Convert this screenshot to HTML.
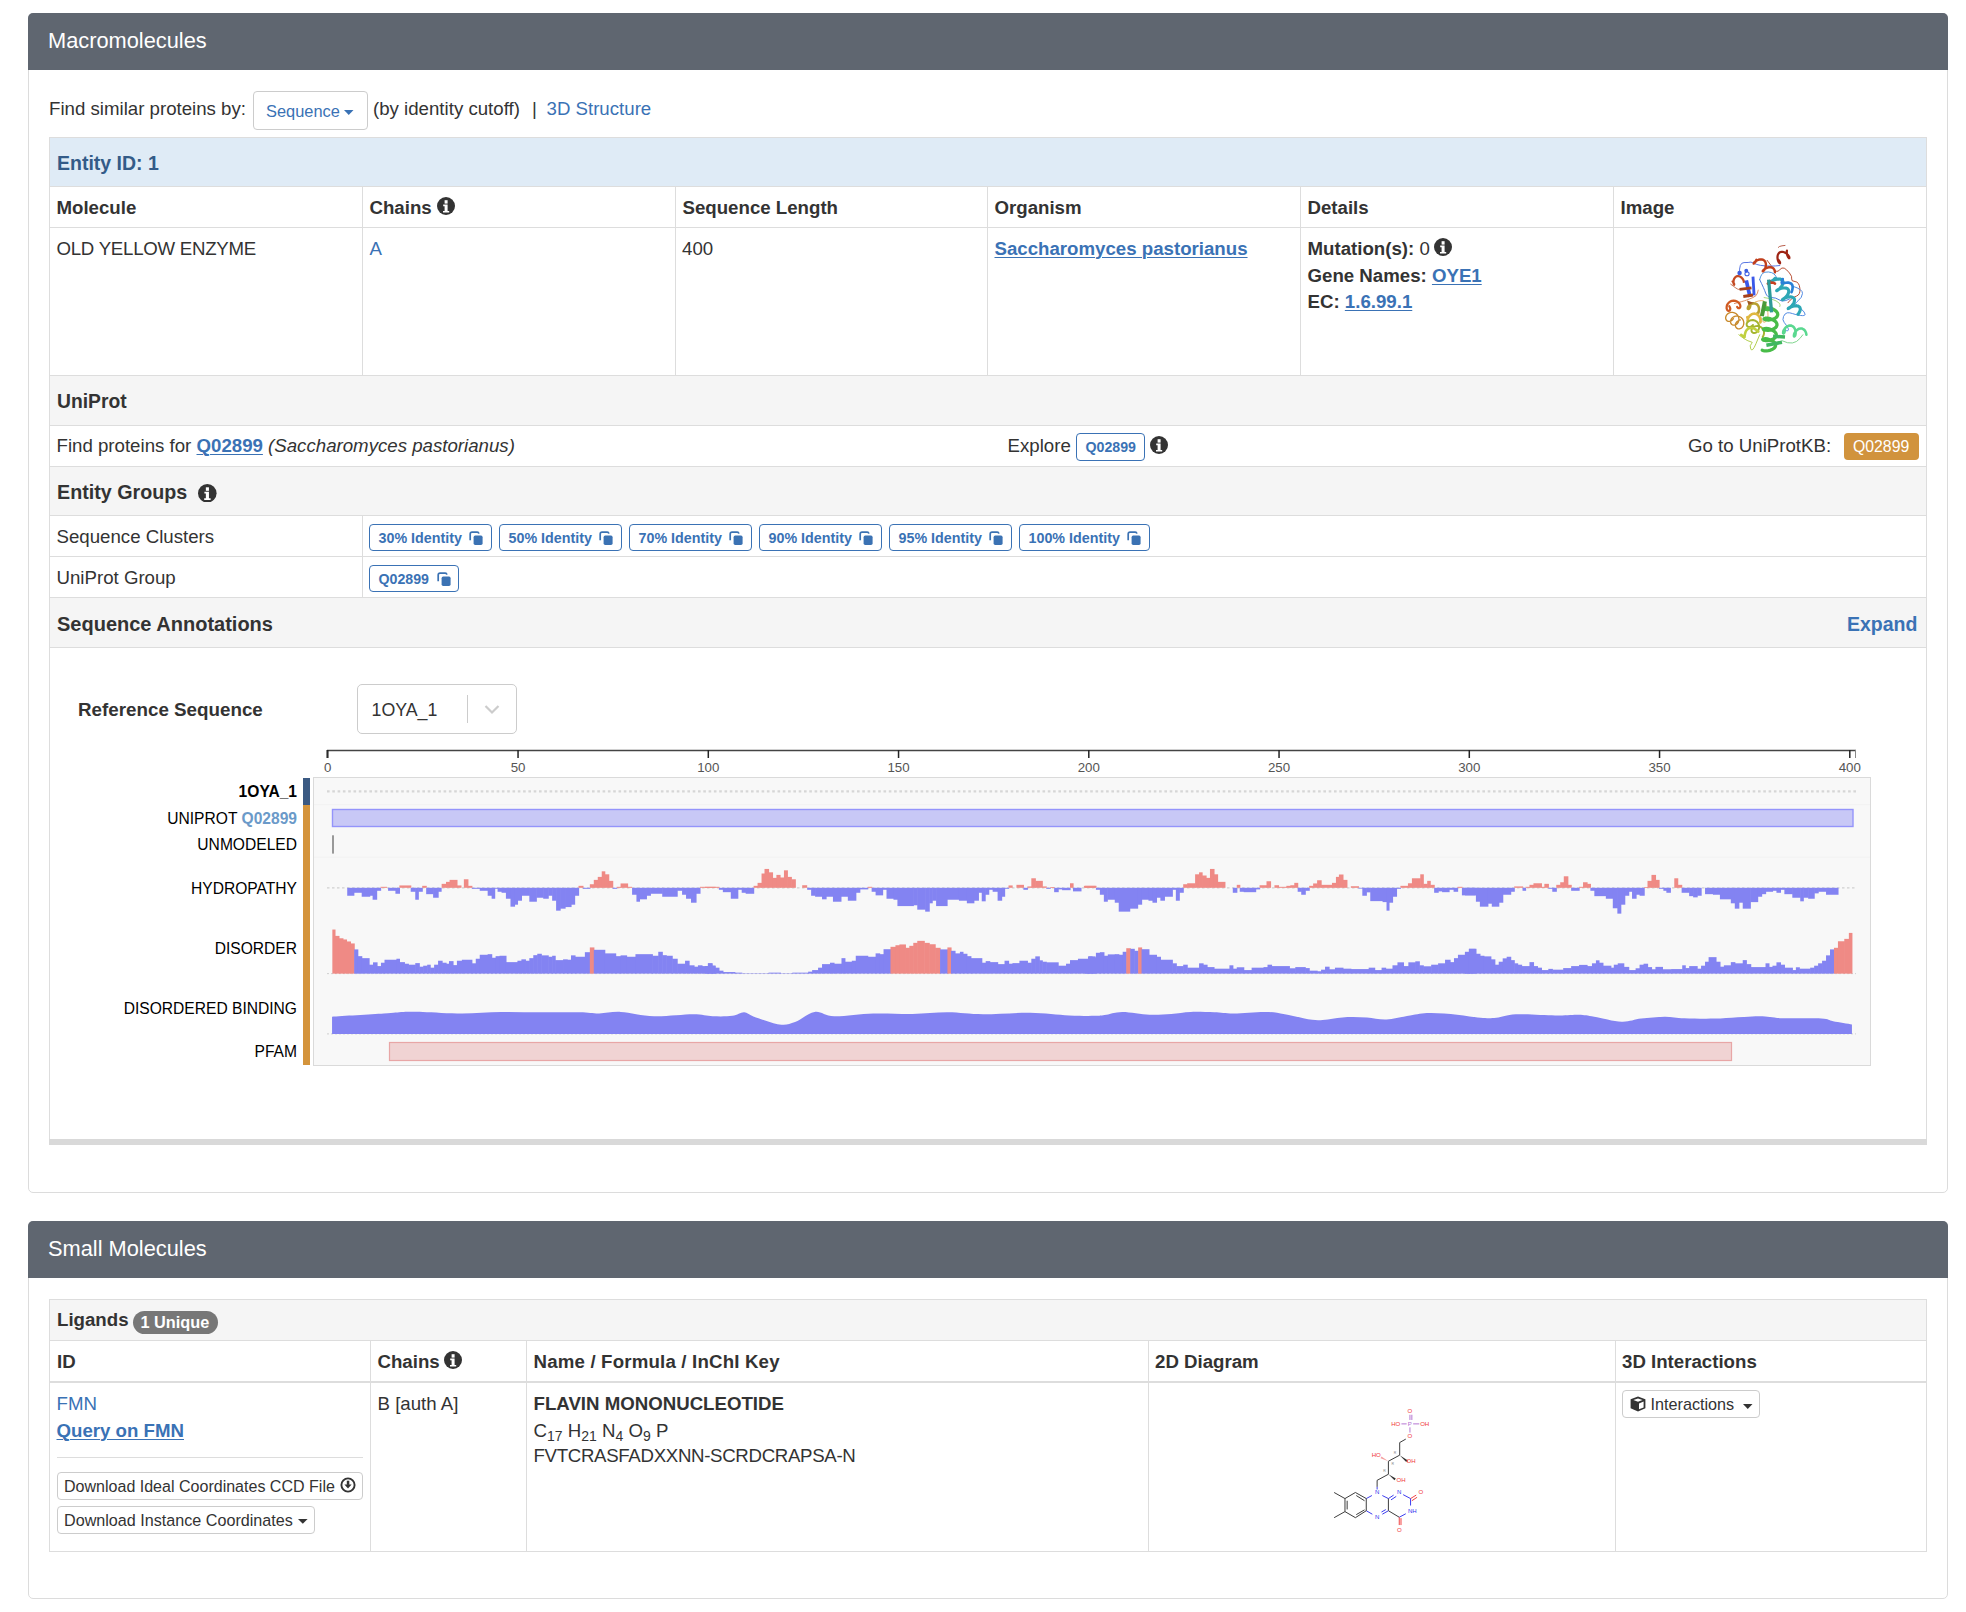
<!DOCTYPE html>
<html><head><meta charset="utf-8"><style>
html,body{margin:0;padding:0;background:#fff;width:1966px;height:1612px;overflow:hidden}
body{position:relative;font-family:"Liberation Sans",sans-serif;color:#333}
.a{position:absolute}
.t{position:absolute;white-space:nowrap}
u{text-decoration-thickness:1.3px;text-underline-offset:2px}
</style></head><body>
<div class="a" style="left:28px;top:13px;width:1920px;height:1180px;border:1px solid #dcdcdc;border-radius:5px;box-sizing:border-box;background:#fff"></div>
<div class="a" style="left:28px;top:13px;width:1920px;height:57px;background:#5f6670;border-radius:5px 5px 0 0"></div>
<div class="t " style="left:48px;top:26.82px;font-size:21.8px;line-height:27.25px;color:#fff">Macromolecules</div>
<div class="t " style="left:49px;top:96.66px;font-size:18.67px;line-height:23.34px;">Find similar proteins by:</div>
<div class="a" style="left:253px;top:91px;width:115px;height:39px;border:1px solid #ccc;border-radius:4px;box-sizing:border-box;background:#fff"></div>
<div class="t " style="left:266px;top:101.06px;font-size:16.4px;line-height:20.5px;color:#3a72b5">Sequence</div>
<svg class="a" style="left:344px;top:110px" width="9.5" height="5" viewBox="0 0 9.5 5"><path d="M0 0H9.5L4.75 5z" fill="#3a72b5"/></svg>
<div class="t " style="left:373px;top:96.66px;font-size:18.67px;line-height:23.34px;">(by identity cutoff)</div>
<div class="t " style="left:532px;top:96.66px;font-size:18.67px;line-height:23.34px;">|</div>
<div class="t " style="left:546.5px;top:96.66px;font-size:18.67px;line-height:23.34px;color:#3a72b5">3D Structure</div>
<div class="a" style="left:49px;top:137px;width:1878px;height:1008px;border:1px solid #ddd;border-bottom:none;box-sizing:border-box"></div>
<div class="a" style="left:50px;top:138px;width:1876px;height:48px;background:#dfebf6"></div>
<div class="t " style="left:57px;top:151.15px;font-size:19.5px;line-height:24.38px;color:#335b88;font-weight:bold">Entity ID: 1</div>
<div class="a" style="left:49px;top:186px;width:1878px;height:1px;background:#ddd"></div>
<div class="a" style="left:49px;top:227px;width:1878px;height:1px;background:#ddd"></div>
<div class="a" style="left:49px;top:375px;width:1878px;height:1px;background:#ddd"></div>
<div class="a" style="left:49px;top:425px;width:1878px;height:1px;background:#ddd"></div>
<div class="a" style="left:49px;top:466px;width:1878px;height:1px;background:#ddd"></div>
<div class="a" style="left:49px;top:515px;width:1878px;height:1px;background:#ddd"></div>
<div class="a" style="left:49px;top:556px;width:1878px;height:1px;background:#ddd"></div>
<div class="a" style="left:49px;top:597px;width:1878px;height:1px;background:#ddd"></div>
<div class="a" style="left:49px;top:647px;width:1878px;height:1px;background:#ddd"></div>
<div class="a" style="left:362px;top:186px;width:1px;height:189px;background:#ddd"></div>
<div class="a" style="left:675px;top:186px;width:1px;height:189px;background:#ddd"></div>
<div class="a" style="left:987px;top:186px;width:1px;height:189px;background:#ddd"></div>
<div class="a" style="left:1300px;top:186px;width:1px;height:189px;background:#ddd"></div>
<div class="a" style="left:1613px;top:186px;width:1px;height:189px;background:#ddd"></div>
<div class="t " style="left:56.5px;top:195.66px;font-size:18.67px;line-height:23.34px;font-weight:bold">Molecule</div>
<div class="t " style="left:369.5px;top:195.66px;font-size:18.67px;line-height:23.34px;font-weight:bold">Chains</div>
<div class="t " style="left:682.5px;top:195.66px;font-size:18.67px;line-height:23.34px;font-weight:bold">Sequence Length</div>
<div class="t " style="left:994.5px;top:195.66px;font-size:18.67px;line-height:23.34px;font-weight:bold">Organism</div>
<div class="t " style="left:1307.5px;top:195.66px;font-size:18.67px;line-height:23.34px;font-weight:bold">Details</div>
<div class="t " style="left:1620.5px;top:195.66px;font-size:18.67px;line-height:23.34px;font-weight:bold">Image</div>
<svg class="a" style="left:436.5px;top:196.5px" width="18" height="18" viewBox="0 0 18 18"><circle cx="9" cy="9" r="9" fill="#333"/><rect x="7.6" y="3.2" width="3" height="3.4" fill="#fff"/><path d="M6.2 7.6h4.4v6.3h1.6v1.7H6v-1.7h1.6V9.3H6.2z" fill="#fff"/></svg>
<div class="t " style="left:56.5px;top:236.86px;font-size:18.67px;line-height:23.34px;letter-spacing:-0.26px">OLD YELLOW ENZYME</div>
<div class="t " style="left:369.5px;top:236.86px;font-size:18.67px;line-height:23.34px;color:#3a72b5">A</div>
<div class="t " style="left:682px;top:236.86px;font-size:18.67px;line-height:23.34px;">400</div>
<div class="t " style="left:994.5px;top:236.86px;font-size:18.67px;line-height:23.34px;color:#3a72b5;font-weight:bold"><u>Saccharomyces pastorianus</u></div>
<div class="t " style="left:1307.5px;top:236.86px;font-size:18.67px;line-height:23.34px;"><b>Mutation(s):</b> 0</div>
<svg class="a" style="left:1433.5px;top:237.5px" width="18" height="18" viewBox="0 0 18 18"><circle cx="9" cy="9" r="9" fill="#333"/><rect x="7.6" y="3.2" width="3" height="3.4" fill="#fff"/><path d="M6.2 7.6h4.4v6.3h1.6v1.7H6v-1.7h1.6V9.3H6.2z" fill="#fff"/></svg>
<div class="t " style="left:1307.5px;top:264.36px;font-size:18.67px;line-height:23.34px;"><b>Gene Names:</b> <b><u style="color:#3a72b5">OYE1</u></b></div>
<div class="t " style="left:1307.5px;top:289.86px;font-size:18.67px;line-height:23.34px;"><b>EC:</b> <b><u style="color:#3a72b5">1.6.99.1</u></b></div>
<div class="a" style="left:50px;top:376px;width:1876px;height:49px;background:#f5f5f5"></div>
<div class="a" style="left:50px;top:467px;width:1876px;height:48px;background:#f5f5f5"></div>
<div class="a" style="left:50px;top:598px;width:1876px;height:49px;background:#f5f5f5"></div>
<div class="t " style="left:57px;top:390.25px;font-size:19.3px;line-height:24.12px;font-weight:bold">UniProt</div>
<div class="t " style="left:56.5px;top:434.06px;font-size:18.67px;line-height:23.34px;">Find proteins for <b><u style="color:#3a72b5">Q02899</u></b> <i>(Saccharomyces pastorianus)</i></div>
<div class="t " style="left:1007.5px;top:433.86px;font-size:18.67px;line-height:23.34px;">Explore</div>
<div class="a" style="left:1076px;top:433px;width:69px;height:28px;border:1px solid #3a72b5;border-radius:4px;box-sizing:border-box"></div>
<div class="t " style="left:1085.5px;top:438.70px;font-size:14.2px;line-height:17.75px;color:#3a72b5;font-weight:bold">Q02899</div>
<svg class="a" style="left:1150.2px;top:435.7px" width="18" height="18" viewBox="0 0 18 18"><circle cx="9" cy="9" r="9" fill="#333"/><rect x="7.6" y="3.2" width="3" height="3.4" fill="#fff"/><path d="M6.2 7.6h4.4v6.3h1.6v1.7H6v-1.7h1.6V9.3H6.2z" fill="#fff"/></svg>
<div class="t " style="left:1688px;top:433.86px;font-size:18.67px;line-height:23.34px;">Go to UniProtKB:</div>
<div class="a" style="left:1844px;top:433px;width:75px;height:27px;background:#d1933d;border-radius:4px"></div>
<div class="t " style="left:1853px;top:437.45px;font-size:15.8px;line-height:19.75px;color:#fff">Q02899</div>
<div class="t " style="left:57px;top:479.56px;font-size:19.7px;line-height:24.62px;font-weight:bold">Entity Groups</div>
<svg class="a" style="left:198.2px;top:483.7px" width="18.6" height="18.6" viewBox="0 0 18 18"><circle cx="9" cy="9" r="9" fill="#333"/><rect x="7.6" y="3.2" width="3" height="3.4" fill="#fff"/><path d="M6.2 7.6h4.4v6.3h1.6v1.7H6v-1.7h1.6V9.3H6.2z" fill="#fff"/></svg>
<div class="a" style="left:362px;top:515px;width:1px;height:82px;background:#ddd"></div>
<div class="t " style="left:56.5px;top:525.16px;font-size:18.67px;line-height:23.34px;">Sequence Clusters</div>
<div class="t " style="left:56.5px;top:565.56px;font-size:18.67px;line-height:23.34px;">UniProt Group</div>
<div class="a" style="left:369px;top:524px;width:123px;height:27px;border:1px solid #3a72b5;border-radius:4px;box-sizing:border-box"></div>
<div class="t " style="left:378.5px;top:530.30px;font-size:14.3px;line-height:17.88px;color:#3a72b5;font-weight:bold">30% Identity</div>
<svg class="a" style="left:469.2px;top:530.8px" width="15" height="15" viewBox="0 0 15 15"><path d="M1.2 9.2V3.0Q1.2 1.1 3.1 1.1H8.2Q9.6 1.1 9.9 2.6" fill="none" stroke="#3b72b3" stroke-width="1.7"/><rect x="4.6" y="4.6" width="9" height="9.3" rx="1.6" fill="#3b72b3"/></svg>
<div class="a" style="left:499px;top:524px;width:123px;height:27px;border:1px solid #3a72b5;border-radius:4px;box-sizing:border-box"></div>
<div class="t " style="left:508.5px;top:530.30px;font-size:14.3px;line-height:17.88px;color:#3a72b5;font-weight:bold">50% Identity</div>
<svg class="a" style="left:599.2px;top:530.8px" width="15" height="15" viewBox="0 0 15 15"><path d="M1.2 9.2V3.0Q1.2 1.1 3.1 1.1H8.2Q9.6 1.1 9.9 2.6" fill="none" stroke="#3b72b3" stroke-width="1.7"/><rect x="4.6" y="4.6" width="9" height="9.3" rx="1.6" fill="#3b72b3"/></svg>
<div class="a" style="left:629px;top:524px;width:123px;height:27px;border:1px solid #3a72b5;border-radius:4px;box-sizing:border-box"></div>
<div class="t " style="left:638.5px;top:530.30px;font-size:14.3px;line-height:17.88px;color:#3a72b5;font-weight:bold">70% Identity</div>
<svg class="a" style="left:729.2px;top:530.8px" width="15" height="15" viewBox="0 0 15 15"><path d="M1.2 9.2V3.0Q1.2 1.1 3.1 1.1H8.2Q9.6 1.1 9.9 2.6" fill="none" stroke="#3b72b3" stroke-width="1.7"/><rect x="4.6" y="4.6" width="9" height="9.3" rx="1.6" fill="#3b72b3"/></svg>
<div class="a" style="left:759px;top:524px;width:123px;height:27px;border:1px solid #3a72b5;border-radius:4px;box-sizing:border-box"></div>
<div class="t " style="left:768.5px;top:530.30px;font-size:14.3px;line-height:17.88px;color:#3a72b5;font-weight:bold">90% Identity</div>
<svg class="a" style="left:859.2px;top:530.8px" width="15" height="15" viewBox="0 0 15 15"><path d="M1.2 9.2V3.0Q1.2 1.1 3.1 1.1H8.2Q9.6 1.1 9.9 2.6" fill="none" stroke="#3b72b3" stroke-width="1.7"/><rect x="4.6" y="4.6" width="9" height="9.3" rx="1.6" fill="#3b72b3"/></svg>
<div class="a" style="left:889px;top:524px;width:123px;height:27px;border:1px solid #3a72b5;border-radius:4px;box-sizing:border-box"></div>
<div class="t " style="left:898.5px;top:530.30px;font-size:14.3px;line-height:17.88px;color:#3a72b5;font-weight:bold">95% Identity</div>
<svg class="a" style="left:989.2px;top:530.8px" width="15" height="15" viewBox="0 0 15 15"><path d="M1.2 9.2V3.0Q1.2 1.1 3.1 1.1H8.2Q9.6 1.1 9.9 2.6" fill="none" stroke="#3b72b3" stroke-width="1.7"/><rect x="4.6" y="4.6" width="9" height="9.3" rx="1.6" fill="#3b72b3"/></svg>
<div class="a" style="left:1019px;top:524px;width:131px;height:27px;border:1px solid #3a72b5;border-radius:4px;box-sizing:border-box"></div>
<div class="t " style="left:1028.5px;top:530.30px;font-size:14.3px;line-height:17.88px;color:#3a72b5;font-weight:bold">100% Identity</div>
<svg class="a" style="left:1127.2px;top:530.8px" width="15" height="15" viewBox="0 0 15 15"><path d="M1.2 9.2V3.0Q1.2 1.1 3.1 1.1H8.2Q9.6 1.1 9.9 2.6" fill="none" stroke="#3b72b3" stroke-width="1.7"/><rect x="4.6" y="4.6" width="9" height="9.3" rx="1.6" fill="#3b72b3"/></svg>
<div class="a" style="left:369px;top:565px;width:90px;height:27px;border:1px solid #3a72b5;border-radius:4px;box-sizing:border-box"></div>
<div class="t " style="left:378.5px;top:571.00px;font-size:14.2px;line-height:17.75px;color:#3a72b5;font-weight:bold">Q02899</div>
<svg class="a" style="left:436.5px;top:571.8px" width="15" height="15" viewBox="0 0 15 15"><path d="M1.2 9.2V3.0Q1.2 1.1 3.1 1.1H8.2Q9.6 1.1 9.9 2.6" fill="none" stroke="#3b72b3" stroke-width="1.7"/><rect x="4.6" y="4.6" width="9" height="9.3" rx="1.6" fill="#3b72b3"/></svg>
<div class="t " style="left:57px;top:611.77px;font-size:20px;line-height:25.0px;font-weight:bold">Sequence Annotations</div>
<div class="t " style="left:1847px;top:612.25px;font-size:19.5px;line-height:24.38px;font-weight:bold;color:#3a72b5">Expand</div>
<div class="a" style="left:49px;top:1139px;width:1878px;height:6px;background:#d9d9d9"></div>
<div class="t " style="left:78px;top:697.73px;font-size:18.8px;line-height:23.5px;font-weight:bold">Reference Sequence</div>
<div class="a" style="left:357px;top:684px;width:160px;height:50px;border:1px solid #ccc;border-radius:5px;box-sizing:border-box;background:#fff"></div>
<div class="t " style="left:371.5px;top:699.00px;font-size:17.8px;line-height:22.25px;color:#333">1OYA_1</div>
<div class="a" style="left:467px;top:695px;width:1px;height:28px;background:#ccc"></div>
<svg class="a" style="left:484px;top:704px" width="16" height="11" viewBox="0 0 16 11"><path d="M1.5 2L8 8.5L14.5 2" fill="none" stroke="#ccc" stroke-width="2.2"/></svg>
<svg class="a" style="left:0;top:0" width="1966" height="1612" viewBox="0 0 1966 1612" font-family="Liberation Sans"><line x1="327" y1="750.5" x2="1856" y2="750.5" stroke="#444" stroke-width="1.3"/><line x1="326.5" y1="750" x2="326.5" y2="758" stroke="#888" stroke-width="1"/><line x1="1855.5" y1="750" x2="1855.5" y2="758" stroke="#888" stroke-width="1"/><line x1="327.80" y1="750" x2="327.80" y2="758" stroke="#222" stroke-width="1.5"/><text x="327.80" y="771.8" font-size="13.3" fill="#555" text-anchor="middle">0</text><line x1="518.05" y1="750" x2="518.05" y2="758" stroke="#222" stroke-width="1.5"/><text x="518.05" y="771.8" font-size="13.3" fill="#555" text-anchor="middle">50</text><line x1="708.30" y1="750" x2="708.30" y2="758" stroke="#222" stroke-width="1.5"/><text x="708.30" y="771.8" font-size="13.3" fill="#555" text-anchor="middle">100</text><line x1="898.55" y1="750" x2="898.55" y2="758" stroke="#222" stroke-width="1.5"/><text x="898.55" y="771.8" font-size="13.3" fill="#555" text-anchor="middle">150</text><line x1="1088.80" y1="750" x2="1088.80" y2="758" stroke="#222" stroke-width="1.5"/><text x="1088.80" y="771.8" font-size="13.3" fill="#555" text-anchor="middle">200</text><line x1="1279.05" y1="750" x2="1279.05" y2="758" stroke="#222" stroke-width="1.5"/><text x="1279.05" y="771.8" font-size="13.3" fill="#555" text-anchor="middle">250</text><line x1="1469.30" y1="750" x2="1469.30" y2="758" stroke="#222" stroke-width="1.5"/><text x="1469.30" y="771.8" font-size="13.3" fill="#555" text-anchor="middle">300</text><line x1="1659.55" y1="750" x2="1659.55" y2="758" stroke="#222" stroke-width="1.5"/><text x="1659.55" y="771.8" font-size="13.3" fill="#555" text-anchor="middle">350</text><line x1="1849.80" y1="750" x2="1849.80" y2="758" stroke="#222" stroke-width="1.5"/><text x="1849.80" y="771.8" font-size="13.3" fill="#555" text-anchor="middle">400</text><rect x="313.5" y="777.5" width="1557" height="288" fill="#f8f8f8" stroke="#dadada" stroke-width="1"/><line x1="314" y1="804.7" x2="1870" y2="804.7" stroke="#f2f2f2" stroke-width="1"/><line x1="314" y1="857.2" x2="1870" y2="857.2" stroke="#f2f2f2" stroke-width="1"/><rect x="303" y="778" width="7" height="27" fill="#3b5a83"/><rect x="303" y="805" width="7" height="260" fill="#d4943c"/><line x1="327" y1="791.4" x2="1856" y2="791.4" stroke="#d6d6d6" stroke-width="2.2" stroke-dasharray="2.6 2.7"/><rect x="332.5" y="809.5" width="1520.5" height="17" fill="#c8c8f6" stroke="#9494fb" stroke-width="1.4"/><rect x="332" y="835.3" width="2" height="18.3" fill="#999"/><line x1="327" y1="887.81" x2="1856" y2="887.81" stroke="#cfcfcf" stroke-width="1.2" stroke-dasharray="2.5 2.5"/><rect x="347.22" y="887.81" width="7.15" height="7.95" fill="#8383f2"/><rect x="353.76" y="887.81" width="8.53" height="4.97" fill="#8383f2"/><rect x="361.70" y="887.81" width="8.53" height="8.94" fill="#8383f2"/><rect x="369.63" y="887.81" width="3.58" height="7.95" fill="#8383f2"/><rect x="372.61" y="887.81" width="4.57" height="11.92" fill="#8383f2"/><rect x="376.58" y="887.81" width="4.57" height="2.98" fill="#8383f2"/><rect x="380.54" y="886.82" width="6.55" height="0.99" fill="#ef8a85"/><rect x="388.08" y="887.81" width="7.94" height="2.98" fill="#8383f2"/><rect x="395.42" y="887.81" width="4.57" height="5.96" fill="#8383f2"/><rect x="399.39" y="885.43" width="11.91" height="2.38" fill="#ef8a85"/><rect x="410.70" y="887.81" width="5.16" height="3.97" fill="#8383f2"/><rect x="415.26" y="887.81" width="3.58" height="11.92" fill="#8383f2"/><rect x="418.23" y="887.81" width="4.57" height="3.97" fill="#8383f2"/><rect x="422.20" y="885.83" width="4.57" height="1.99" fill="#ef8a85"/><rect x="426.17" y="887.81" width="7.54" height="6.36" fill="#8383f2"/><rect x="433.11" y="887.81" width="5.56" height="9.93" fill="#8383f2"/><rect x="438.07" y="887.81" width="3.58" height="3.97" fill="#8383f2"/><rect x="441.64" y="883.84" width="4.96" height="3.97" fill="#ef8a85"/><rect x="446.01" y="881.85" width="4.17" height="5.96" fill="#ef8a85"/><rect x="449.58" y="879.87" width="7.94" height="7.95" fill="#ef8a85"/><rect x="456.92" y="885.43" width="4.57" height="2.38" fill="#ef8a85"/><rect x="463.86" y="879.27" width="4.57" height="8.54" fill="#ef8a85"/><rect x="467.83" y="885.83" width="4.57" height="1.99" fill="#ef8a85"/><rect x="471.80" y="887.81" width="8.53" height="0.99" fill="#8383f2"/><rect x="479.73" y="887.81" width="8.53" height="2.98" fill="#8383f2"/><rect x="487.67" y="887.81" width="4.57" height="7.95" fill="#8383f2"/><rect x="491.63" y="887.81" width="3.58" height="10.93" fill="#8383f2"/><rect x="494.61" y="887.81" width="3.58" height="0.99" fill="#8383f2"/><rect x="497.58" y="887.81" width="4.57" height="3.97" fill="#8383f2"/><rect x="501.55" y="887.81" width="4.96" height="4.97" fill="#8383f2"/><rect x="505.92" y="887.81" width="5.16" height="10.93" fill="#8383f2"/><rect x="510.48" y="887.81" width="4.57" height="18.87" fill="#8383f2"/><rect x="514.45" y="887.81" width="3.58" height="16.89" fill="#8383f2"/><rect x="517.42" y="887.81" width="4.57" height="12.91" fill="#8383f2"/><rect x="521.39" y="887.81" width="8.53" height="7.95" fill="#8383f2"/><rect x="529.32" y="887.81" width="7.54" height="13.91" fill="#8383f2"/><rect x="536.27" y="887.81" width="7.54" height="9.93" fill="#8383f2"/><rect x="543.21" y="887.81" width="5.56" height="10.93" fill="#8383f2"/><rect x="548.17" y="887.81" width="4.57" height="7.95" fill="#8383f2"/><rect x="552.14" y="887.81" width="4.57" height="12.91" fill="#8383f2"/><rect x="556.10" y="887.81" width="4.57" height="22.85" fill="#8383f2"/><rect x="560.07" y="887.81" width="5.56" height="20.86" fill="#8383f2"/><rect x="565.03" y="887.81" width="6.55" height="19.27" fill="#8383f2"/><rect x="570.98" y="887.81" width="4.17" height="16.89" fill="#8383f2"/><rect x="574.55" y="887.81" width="4.57" height="7.95" fill="#8383f2"/><rect x="578.52" y="885.83" width="4.96" height="1.99" fill="#ef8a85"/><rect x="582.88" y="887.81" width="7.54" height="0.99" fill="#8383f2"/><rect x="589.83" y="884.24" width="4.57" height="3.58" fill="#ef8a85"/><rect x="593.79" y="879.87" width="4.57" height="7.95" fill="#ef8a85"/><rect x="597.76" y="876.89" width="4.57" height="10.93" fill="#ef8a85"/><rect x="601.73" y="871.32" width="3.58" height="16.49" fill="#ef8a85"/><rect x="604.70" y="874.30" width="4.57" height="13.51" fill="#ef8a85"/><rect x="608.67" y="880.86" width="4.57" height="6.95" fill="#ef8a85"/><rect x="612.64" y="887.81" width="4.57" height="0.99" fill="#8383f2"/><rect x="616.61" y="886.82" width="4.57" height="0.99" fill="#ef8a85"/><rect x="620.57" y="883.44" width="7.54" height="4.37" fill="#ef8a85"/><rect x="627.52" y="886.82" width="4.57" height="0.99" fill="#ef8a85"/><rect x="632.08" y="887.81" width="4.96" height="6.95" fill="#8383f2"/><rect x="636.44" y="887.81" width="3.58" height="13.91" fill="#8383f2"/><rect x="639.42" y="887.81" width="7.54" height="11.52" fill="#8383f2"/><rect x="646.36" y="887.81" width="4.57" height="7.95" fill="#8383f2"/><rect x="650.33" y="887.81" width="12.50" height="5.96" fill="#8383f2"/><rect x="662.23" y="887.81" width="15.48" height="8.94" fill="#8383f2"/><rect x="677.11" y="887.81" width="5.56" height="2.98" fill="#8383f2"/><rect x="682.07" y="887.81" width="4.57" height="6.95" fill="#8383f2"/><rect x="686.04" y="887.81" width="5.56" height="10.93" fill="#8383f2"/><rect x="691.00" y="887.81" width="5.56" height="14.90" fill="#8383f2"/><rect x="695.96" y="887.81" width="4.57" height="5.96" fill="#8383f2"/><rect x="699.92" y="886.82" width="15.68" height="0.99" fill="#ef8a85"/><rect x="705.00" y="886.82" width="14.49" height="0.99" fill="#ef8a85"/><rect x="718.89" y="887.81" width="4.57" height="1.99" fill="#8383f2"/><rect x="722.85" y="887.81" width="8.53" height="4.37" fill="#8383f2"/><rect x="730.79" y="887.81" width="7.54" height="10.93" fill="#8383f2"/><rect x="737.73" y="887.81" width="4.57" height="1.99" fill="#8383f2"/><rect x="741.70" y="887.81" width="4.57" height="4.97" fill="#8383f2"/><rect x="745.67" y="887.81" width="8.53" height="5.96" fill="#8383f2"/><rect x="753.60" y="885.83" width="4.57" height="1.99" fill="#ef8a85"/><rect x="757.57" y="882.85" width="4.57" height="4.97" fill="#ef8a85"/><rect x="761.54" y="873.51" width="3.58" height="14.30" fill="#ef8a85"/><rect x="764.51" y="868.94" width="4.57" height="18.87" fill="#ef8a85"/><rect x="768.48" y="872.32" width="4.57" height="15.50" fill="#ef8a85"/><rect x="772.45" y="877.88" width="4.57" height="9.93" fill="#ef8a85"/><rect x="776.41" y="874.90" width="4.17" height="12.91" fill="#ef8a85"/><rect x="779.98" y="877.48" width="4.57" height="10.33" fill="#ef8a85"/><rect x="783.95" y="870.33" width="3.97" height="17.48" fill="#ef8a85"/><rect x="787.32" y="876.89" width="4.57" height="10.93" fill="#ef8a85"/><rect x="791.29" y="879.27" width="4.57" height="8.54" fill="#ef8a85"/><rect x="802.20" y="885.23" width="4.96" height="2.58" fill="#ef8a85"/><rect x="807.16" y="887.81" width="4.57" height="1.99" fill="#8383f2"/><rect x="811.13" y="887.81" width="4.57" height="7.95" fill="#8383f2"/><rect x="815.10" y="887.81" width="7.54" height="8.94" fill="#8383f2"/><rect x="822.04" y="887.81" width="4.57" height="11.52" fill="#8383f2"/><rect x="826.01" y="887.81" width="7.54" height="8.94" fill="#8383f2"/><rect x="832.95" y="887.81" width="8.53" height="13.91" fill="#8383f2"/><rect x="840.89" y="887.81" width="7.54" height="8.94" fill="#8383f2"/><rect x="847.83" y="887.81" width="8.53" height="12.91" fill="#8383f2"/><rect x="855.76" y="887.81" width="4.57" height="4.97" fill="#8383f2"/><rect x="859.73" y="887.81" width="8.53" height="1.59" fill="#8383f2"/><rect x="867.67" y="886.82" width="4.57" height="0.99" fill="#ef8a85"/><rect x="871.63" y="887.81" width="4.57" height="3.97" fill="#8383f2"/><rect x="875.60" y="887.81" width="7.54" height="7.55" fill="#8383f2"/><rect x="882.54" y="887.81" width="4.57" height="1.99" fill="#8383f2"/><rect x="886.51" y="887.81" width="7.54" height="10.93" fill="#8383f2"/><rect x="893.45" y="887.81" width="4.57" height="11.92" fill="#8383f2"/><rect x="897.42" y="887.81" width="16.47" height="18.28" fill="#8383f2"/><rect x="913.29" y="887.81" width="4.57" height="17.48" fill="#8383f2"/><rect x="917.26" y="887.81" width="8.53" height="21.85" fill="#8383f2"/><rect x="925.19" y="887.81" width="4.57" height="23.84" fill="#8383f2"/><rect x="929.16" y="887.81" width="3.58" height="15.50" fill="#8383f2"/><rect x="932.14" y="887.81" width="4.57" height="12.91" fill="#8383f2"/><rect x="936.10" y="887.81" width="11.51" height="18.28" fill="#8383f2"/><rect x="947.01" y="887.81" width="12.50" height="11.92" fill="#8383f2"/><rect x="958.92" y="887.81" width="8.53" height="12.91" fill="#8383f2"/><rect x="966.85" y="887.81" width="7.54" height="15.50" fill="#8383f2"/><rect x="973.79" y="887.81" width="5.16" height="12.91" fill="#8383f2"/><rect x="978.36" y="887.81" width="3.97" height="4.97" fill="#8383f2"/><rect x="981.73" y="887.81" width="3.97" height="13.51" fill="#8383f2"/><rect x="985.10" y="887.81" width="4.17" height="6.95" fill="#8383f2"/><rect x="988.67" y="887.81" width="4.57" height="1.99" fill="#8383f2"/><rect x="992.64" y="887.81" width="5.56" height="3.97" fill="#8383f2"/><rect x="997.60" y="887.81" width="4.57" height="12.91" fill="#8383f2"/><rect x="1001.57" y="887.81" width="3.58" height="8.94" fill="#8383f2"/><rect x="1004.54" y="887.81" width="4.57" height="0.99" fill="#8383f2"/><rect x="1008.51" y="885.43" width="4.17" height="2.38" fill="#ef8a85"/><rect x="1016.44" y="884.83" width="7.54" height="2.98" fill="#ef8a85"/><rect x="1023.39" y="887.81" width="4.57" height="1.99" fill="#8383f2"/><rect x="1027.36" y="886.42" width="4.57" height="1.39" fill="#ef8a85"/><rect x="1031.32" y="878.28" width="4.57" height="9.54" fill="#ef8a85"/><rect x="1035.29" y="880.86" width="7.54" height="6.95" fill="#ef8a85"/><rect x="1042.23" y="886.42" width="4.57" height="1.39" fill="#ef8a85"/><rect x="1046.20" y="887.81" width="4.57" height="0.99" fill="#8383f2"/><rect x="1050.17" y="887.01" width="4.57" height="0.80" fill="#ef8a85"/><rect x="1054.14" y="887.81" width="4.57" height="4.37" fill="#8383f2"/><rect x="1058.10" y="887.81" width="4.57" height="1.59" fill="#8383f2"/><rect x="1062.07" y="887.81" width="8.53" height="2.38" fill="#8383f2"/><rect x="1070.01" y="883.25" width="3.58" height="4.57" fill="#ef8a85"/><rect x="1072.98" y="887.81" width="8.53" height="3.58" fill="#8383f2"/><rect x="1083.89" y="885.83" width="11.71" height="1.99" fill="#ef8a85"/><rect x="1085.00" y="885.83" width="11.51" height="1.99" fill="#ef8a85"/><rect x="1095.91" y="887.81" width="4.57" height="1.99" fill="#8383f2"/><rect x="1099.88" y="887.81" width="4.57" height="6.95" fill="#8383f2"/><rect x="1103.85" y="887.81" width="3.97" height="13.91" fill="#8383f2"/><rect x="1107.22" y="887.81" width="8.14" height="11.92" fill="#8383f2"/><rect x="1114.76" y="887.81" width="4.57" height="14.90" fill="#8383f2"/><rect x="1118.72" y="887.81" width="11.51" height="23.84" fill="#8383f2"/><rect x="1129.63" y="887.81" width="8.53" height="20.86" fill="#8383f2"/><rect x="1137.57" y="887.81" width="4.57" height="16.89" fill="#8383f2"/><rect x="1141.54" y="887.81" width="7.54" height="11.92" fill="#8383f2"/><rect x="1148.48" y="887.81" width="4.57" height="12.91" fill="#8383f2"/><rect x="1152.45" y="887.81" width="4.57" height="14.90" fill="#8383f2"/><rect x="1156.41" y="887.81" width="4.57" height="9.93" fill="#8383f2"/><rect x="1160.38" y="887.81" width="4.57" height="12.91" fill="#8383f2"/><rect x="1164.35" y="887.81" width="8.53" height="8.94" fill="#8383f2"/><rect x="1172.28" y="887.81" width="4.17" height="1.99" fill="#8383f2"/><rect x="1175.85" y="887.81" width="3.97" height="12.91" fill="#8383f2"/><rect x="1179.23" y="887.81" width="4.57" height="4.97" fill="#8383f2"/><rect x="1183.19" y="884.24" width="4.57" height="3.58" fill="#ef8a85"/><rect x="1187.16" y="883.25" width="8.53" height="4.57" fill="#ef8a85"/><rect x="1195.10" y="874.30" width="4.57" height="13.51" fill="#ef8a85"/><rect x="1199.06" y="872.32" width="3.58" height="15.50" fill="#ef8a85"/><rect x="1202.04" y="875.50" width="4.57" height="12.32" fill="#ef8a85"/><rect x="1206.01" y="877.88" width="4.57" height="9.93" fill="#ef8a85"/><rect x="1209.97" y="868.94" width="4.57" height="18.87" fill="#ef8a85"/><rect x="1213.94" y="874.30" width="4.17" height="13.51" fill="#ef8a85"/><rect x="1217.51" y="881.85" width="7.94" height="5.96" fill="#ef8a85"/><rect x="1232.79" y="887.81" width="4.57" height="4.97" fill="#8383f2"/><rect x="1236.75" y="884.83" width="3.58" height="2.98" fill="#ef8a85"/><rect x="1239.73" y="887.81" width="4.57" height="3.97" fill="#8383f2"/><rect x="1243.70" y="887.81" width="12.50" height="4.37" fill="#8383f2"/><rect x="1255.60" y="887.81" width="4.57" height="1.59" fill="#8383f2"/><rect x="1259.57" y="885.23" width="7.54" height="2.58" fill="#ef8a85"/><rect x="1266.51" y="881.26" width="4.57" height="6.56" fill="#ef8a85"/><rect x="1274.45" y="885.23" width="4.57" height="2.58" fill="#ef8a85"/><rect x="1278.41" y="886.82" width="8.53" height="0.99" fill="#ef8a85"/><rect x="1286.35" y="885.83" width="4.57" height="1.99" fill="#ef8a85"/><rect x="1290.32" y="885.23" width="4.57" height="2.58" fill="#ef8a85"/><rect x="1294.28" y="882.85" width="3.97" height="4.97" fill="#ef8a85"/><rect x="1297.66" y="887.81" width="4.17" height="3.97" fill="#8383f2"/><rect x="1301.23" y="887.81" width="4.57" height="6.95" fill="#8383f2"/><rect x="1305.19" y="887.81" width="4.57" height="2.98" fill="#8383f2"/><rect x="1309.16" y="885.83" width="4.57" height="1.99" fill="#ef8a85"/><rect x="1313.13" y="883.44" width="4.57" height="4.37" fill="#ef8a85"/><rect x="1317.10" y="880.26" width="4.57" height="7.55" fill="#ef8a85"/><rect x="1321.06" y="884.83" width="11.51" height="2.98" fill="#ef8a85"/><rect x="1331.97" y="882.85" width="4.57" height="4.97" fill="#ef8a85"/><rect x="1335.94" y="876.89" width="3.58" height="10.93" fill="#ef8a85"/><rect x="1338.92" y="874.50" width="4.57" height="13.31" fill="#ef8a85"/><rect x="1342.88" y="879.87" width="4.57" height="7.95" fill="#ef8a85"/><rect x="1350.82" y="886.23" width="8.14" height="1.59" fill="#ef8a85"/><rect x="1358.36" y="887.81" width="4.57" height="0.80" fill="#8383f2"/><rect x="1362.32" y="887.81" width="4.57" height="7.95" fill="#8383f2"/><rect x="1366.29" y="887.81" width="4.57" height="4.57" fill="#8383f2"/><rect x="1370.26" y="887.81" width="12.90" height="13.31" fill="#8383f2"/><rect x="1382.56" y="887.81" width="4.57" height="14.30" fill="#8383f2"/><rect x="1386.53" y="887.81" width="2.98" height="22.85" fill="#8383f2"/><rect x="1388.91" y="887.81" width="4.17" height="14.90" fill="#8383f2"/><rect x="1392.48" y="887.81" width="4.57" height="8.94" fill="#8383f2"/><rect x="1396.44" y="887.81" width="4.57" height="0.99" fill="#8383f2"/><rect x="1400.41" y="885.83" width="8.14" height="1.99" fill="#ef8a85"/><rect x="1407.95" y="883.25" width="4.57" height="4.57" fill="#ef8a85"/><rect x="1411.92" y="878.28" width="8.93" height="9.54" fill="#ef8a85"/><rect x="1420.25" y="874.30" width="3.58" height="13.51" fill="#ef8a85"/><rect x="1423.22" y="883.84" width="4.57" height="3.97" fill="#ef8a85"/><rect x="1427.19" y="880.86" width="3.58" height="6.95" fill="#ef8a85"/><rect x="1430.17" y="884.83" width="4.57" height="2.98" fill="#ef8a85"/><rect x="1434.14" y="887.81" width="4.57" height="4.97" fill="#8383f2"/><rect x="1438.10" y="887.81" width="4.57" height="3.58" fill="#8383f2"/><rect x="1442.07" y="887.81" width="7.54" height="4.37" fill="#8383f2"/><rect x="1449.01" y="887.81" width="5.16" height="1.99" fill="#8383f2"/><rect x="1453.58" y="887.81" width="4.57" height="3.97" fill="#8383f2"/><rect x="1457.54" y="886.82" width="4.96" height="0.99" fill="#ef8a85"/><rect x="1461.91" y="887.81" width="13.69" height="7.55" fill="#8383f2"/><rect x="1465.00" y="887.81" width="11.51" height="7.55" fill="#8383f2"/><rect x="1475.91" y="887.81" width="4.57" height="13.91" fill="#8383f2"/><rect x="1479.88" y="887.81" width="8.53" height="18.87" fill="#8383f2"/><rect x="1487.81" y="887.81" width="4.57" height="15.89" fill="#8383f2"/><rect x="1491.78" y="887.81" width="7.54" height="18.87" fill="#8383f2"/><rect x="1498.72" y="887.81" width="4.57" height="14.90" fill="#8383f2"/><rect x="1502.69" y="887.81" width="8.53" height="6.95" fill="#8383f2"/><rect x="1510.63" y="887.81" width="4.17" height="3.97" fill="#8383f2"/><rect x="1514.20" y="886.42" width="8.93" height="1.39" fill="#ef8a85"/><rect x="1522.53" y="887.81" width="3.58" height="2.98" fill="#8383f2"/><rect x="1525.50" y="886.82" width="4.57" height="0.99" fill="#ef8a85"/><rect x="1529.47" y="884.83" width="4.57" height="2.98" fill="#ef8a85"/><rect x="1533.44" y="883.25" width="8.53" height="4.57" fill="#ef8a85"/><rect x="1541.37" y="886.82" width="3.58" height="0.99" fill="#ef8a85"/><rect x="1544.35" y="883.84" width="4.57" height="3.97" fill="#ef8a85"/><rect x="1548.32" y="887.81" width="4.57" height="0.99" fill="#8383f2"/><rect x="1552.28" y="887.81" width="4.57" height="3.97" fill="#8383f2"/><rect x="1556.25" y="884.83" width="4.57" height="2.98" fill="#ef8a85"/><rect x="1560.22" y="882.25" width="4.17" height="5.56" fill="#ef8a85"/><rect x="1563.79" y="876.29" width="4.57" height="11.52" fill="#ef8a85"/><rect x="1567.76" y="884.83" width="3.97" height="2.98" fill="#ef8a85"/><rect x="1571.13" y="887.81" width="8.53" height="2.98" fill="#8383f2"/><rect x="1579.06" y="886.82" width="4.57" height="0.99" fill="#ef8a85"/><rect x="1583.03" y="882.25" width="4.57" height="5.56" fill="#ef8a85"/><rect x="1587.00" y="883.84" width="3.97" height="3.97" fill="#ef8a85"/><rect x="1590.37" y="887.81" width="4.57" height="2.98" fill="#8383f2"/><rect x="1594.34" y="887.81" width="12.11" height="8.34" fill="#8383f2"/><rect x="1605.84" y="887.81" width="7.54" height="10.93" fill="#8383f2"/><rect x="1612.79" y="887.81" width="5.16" height="20.46" fill="#8383f2"/><rect x="1617.35" y="887.81" width="3.97" height="25.83" fill="#8383f2"/><rect x="1620.72" y="887.81" width="4.57" height="16.89" fill="#8383f2"/><rect x="1624.69" y="887.81" width="4.57" height="7.95" fill="#8383f2"/><rect x="1628.66" y="887.81" width="3.97" height="3.97" fill="#8383f2"/><rect x="1632.03" y="887.81" width="4.57" height="10.93" fill="#8383f2"/><rect x="1636.00" y="887.81" width="4.17" height="6.95" fill="#8383f2"/><rect x="1639.57" y="887.81" width="5.16" height="7.95" fill="#8383f2"/><rect x="1644.13" y="887.01" width="3.97" height="0.80" fill="#ef8a85"/><rect x="1647.50" y="880.86" width="4.57" height="6.95" fill="#ef8a85"/><rect x="1651.47" y="874.90" width="4.57" height="12.91" fill="#ef8a85"/><rect x="1655.44" y="879.87" width="4.17" height="7.95" fill="#ef8a85"/><rect x="1659.01" y="887.81" width="4.96" height="0.99" fill="#8383f2"/><rect x="1663.37" y="887.81" width="3.58" height="2.98" fill="#8383f2"/><rect x="1666.35" y="887.81" width="4.57" height="4.97" fill="#8383f2"/><rect x="1674.28" y="878.28" width="3.97" height="9.54" fill="#ef8a85"/><rect x="1677.66" y="884.83" width="4.57" height="2.98" fill="#ef8a85"/><rect x="1681.62" y="887.81" width="8.14" height="4.97" fill="#8383f2"/><rect x="1689.16" y="887.81" width="4.57" height="8.34" fill="#8383f2"/><rect x="1693.13" y="887.81" width="4.57" height="9.54" fill="#8383f2"/><rect x="1697.10" y="887.81" width="4.57" height="7.95" fill="#8383f2"/><rect x="1705.03" y="887.81" width="8.53" height="6.36" fill="#8383f2"/><rect x="1712.97" y="887.81" width="7.54" height="6.95" fill="#8383f2"/><rect x="1719.91" y="887.81" width="11.51" height="11.52" fill="#8383f2"/><rect x="1730.82" y="887.81" width="4.57" height="15.50" fill="#8383f2"/><rect x="1734.79" y="887.81" width="4.57" height="20.86" fill="#8383f2"/><rect x="1738.75" y="887.81" width="4.57" height="14.90" fill="#8383f2"/><rect x="1742.72" y="887.81" width="8.14" height="20.86" fill="#8383f2"/><rect x="1750.26" y="887.81" width="7.94" height="14.30" fill="#8383f2"/><rect x="1757.60" y="887.81" width="4.57" height="8.94" fill="#8383f2"/><rect x="1761.57" y="887.81" width="4.57" height="6.36" fill="#8383f2"/><rect x="1765.53" y="887.81" width="7.54" height="3.97" fill="#8383f2"/><rect x="1772.48" y="887.81" width="4.57" height="2.98" fill="#8383f2"/><rect x="1776.44" y="887.81" width="4.57" height="4.97" fill="#8383f2"/><rect x="1780.41" y="887.81" width="4.57" height="1.99" fill="#8383f2"/><rect x="1784.38" y="887.81" width="8.53" height="6.36" fill="#8383f2"/><rect x="1792.31" y="887.81" width="8.53" height="9.93" fill="#8383f2"/><rect x="1800.25" y="887.81" width="3.58" height="13.51" fill="#8383f2"/><rect x="1803.22" y="887.81" width="5.56" height="9.93" fill="#8383f2"/><rect x="1808.18" y="887.81" width="6.55" height="10.93" fill="#8383f2"/><rect x="1814.14" y="887.81" width="4.57" height="5.56" fill="#8383f2"/><rect x="1818.10" y="887.81" width="8.53" height="3.97" fill="#8383f2"/><rect x="1826.04" y="887.81" width="12.50" height="6.95" fill="#8383f2"/><line x1="327" y1="973.64" x2="1856" y2="973.64" stroke="#cfcfcf" stroke-width="1" stroke-dasharray="2 2"/><rect x="332.34" y="929.54" width="3.18" height="44.11" fill="#ef8a85"/><rect x="334.92" y="935.89" width="4.57" height="37.75" fill="#ef8a85"/><rect x="338.89" y="938.28" width="4.57" height="35.36" fill="#ef8a85"/><rect x="342.85" y="939.47" width="4.17" height="34.17" fill="#ef8a85"/><rect x="346.42" y="941.46" width="4.57" height="32.19" fill="#ef8a85"/><rect x="350.39" y="943.44" width="4.37" height="30.20" fill="#ef8a85"/><rect x="354.16" y="949.40" width="4.17" height="24.24" fill="#8383f2"/><rect x="357.73" y="956.16" width="4.57" height="17.48" fill="#8383f2"/><rect x="361.70" y="958.15" width="7.94" height="15.50" fill="#8383f2"/><rect x="369.04" y="964.70" width="4.57" height="8.94" fill="#8383f2"/><rect x="373.01" y="962.32" width="4.57" height="11.32" fill="#8383f2"/><rect x="376.97" y="966.09" width="4.57" height="7.55" fill="#8383f2"/><rect x="380.94" y="962.72" width="4.17" height="10.93" fill="#8383f2"/><rect x="384.51" y="959.74" width="12.50" height="13.91" fill="#8383f2"/><rect x="396.41" y="958.74" width="3.58" height="14.90" fill="#8383f2"/><rect x="399.39" y="962.12" width="5.56" height="11.52" fill="#8383f2"/><rect x="404.35" y="963.71" width="4.57" height="9.93" fill="#8383f2"/><rect x="408.32" y="964.70" width="7.54" height="8.94" fill="#8383f2"/><rect x="415.26" y="963.11" width="4.57" height="10.53" fill="#8383f2"/><rect x="419.23" y="966.69" width="4.57" height="6.95" fill="#8383f2"/><rect x="423.19" y="965.70" width="4.57" height="7.95" fill="#8383f2"/><rect x="427.16" y="964.70" width="3.58" height="8.94" fill="#8383f2"/><rect x="430.14" y="967.68" width="4.57" height="5.96" fill="#8383f2"/><rect x="434.10" y="964.70" width="4.57" height="8.94" fill="#8383f2"/><rect x="438.07" y="960.73" width="4.57" height="12.91" fill="#8383f2"/><rect x="442.04" y="962.72" width="4.57" height="10.93" fill="#8383f2"/><rect x="446.01" y="963.71" width="3.58" height="9.93" fill="#8383f2"/><rect x="448.98" y="961.13" width="4.57" height="12.52" fill="#8383f2"/><rect x="452.95" y="965.10" width="4.57" height="8.54" fill="#8383f2"/><rect x="456.92" y="960.73" width="5.56" height="12.91" fill="#8383f2"/><rect x="461.88" y="959.74" width="10.52" height="13.91" fill="#8383f2"/><rect x="471.80" y="963.31" width="4.57" height="10.33" fill="#8383f2"/><rect x="475.76" y="958.74" width="4.57" height="14.90" fill="#8383f2"/><rect x="479.73" y="954.77" width="8.53" height="18.87" fill="#8383f2"/><rect x="487.67" y="954.17" width="4.57" height="19.47" fill="#8383f2"/><rect x="491.63" y="957.75" width="4.57" height="15.89" fill="#8383f2"/><rect x="495.60" y="956.16" width="4.57" height="17.48" fill="#8383f2"/><rect x="499.57" y="955.76" width="6.95" height="17.88" fill="#8383f2"/><rect x="505.92" y="962.12" width="12.11" height="11.52" fill="#8383f2"/><rect x="517.42" y="960.73" width="4.57" height="12.91" fill="#8383f2"/><rect x="521.39" y="959.34" width="4.57" height="14.30" fill="#8383f2"/><rect x="525.36" y="960.73" width="4.57" height="12.91" fill="#8383f2"/><rect x="529.32" y="958.15" width="4.57" height="15.50" fill="#8383f2"/><rect x="533.29" y="955.17" width="4.57" height="18.48" fill="#8383f2"/><rect x="537.26" y="953.77" width="4.57" height="19.87" fill="#8383f2"/><rect x="541.23" y="955.36" width="7.54" height="18.28" fill="#8383f2"/><rect x="548.17" y="956.75" width="4.57" height="16.89" fill="#8383f2"/><rect x="552.14" y="955.76" width="3.58" height="17.88" fill="#8383f2"/><rect x="555.11" y="960.13" width="8.53" height="13.51" fill="#8383f2"/><rect x="563.05" y="959.34" width="4.57" height="14.30" fill="#8383f2"/><rect x="567.01" y="959.74" width="4.57" height="13.91" fill="#8383f2"/><rect x="570.98" y="955.36" width="4.57" height="18.28" fill="#8383f2"/><rect x="574.95" y="956.75" width="10.52" height="16.89" fill="#8383f2"/><rect x="584.87" y="952.19" width="5.56" height="21.46" fill="#8383f2"/><rect x="589.83" y="947.42" width="4.57" height="26.23" fill="#ef8a85"/><rect x="593.79" y="949.80" width="11.51" height="23.84" fill="#8383f2"/><rect x="604.70" y="953.38" width="11.51" height="20.26" fill="#8383f2"/><rect x="615.62" y="956.16" width="5.56" height="17.48" fill="#8383f2"/><rect x="620.57" y="955.36" width="6.55" height="18.28" fill="#8383f2"/><rect x="626.53" y="956.75" width="9.53" height="16.89" fill="#8383f2"/><rect x="635.45" y="954.17" width="17.46" height="19.47" fill="#8383f2"/><rect x="652.31" y="955.76" width="6.55" height="17.88" fill="#8383f2"/><rect x="658.27" y="951.79" width="4.57" height="21.85" fill="#8383f2"/><rect x="662.23" y="955.17" width="4.57" height="18.48" fill="#8383f2"/><rect x="666.20" y="955.76" width="6.55" height="17.88" fill="#8383f2"/><rect x="672.15" y="958.74" width="5.56" height="14.90" fill="#8383f2"/><rect x="677.11" y="963.71" width="8.53" height="9.93" fill="#8383f2"/><rect x="685.05" y="960.73" width="4.57" height="12.91" fill="#8383f2"/><rect x="689.01" y="965.30" width="5.56" height="8.34" fill="#8383f2"/><rect x="693.97" y="966.69" width="4.57" height="6.95" fill="#8383f2"/><rect x="697.94" y="965.30" width="4.57" height="8.34" fill="#8383f2"/><rect x="701.91" y="966.09" width="6.55" height="7.55" fill="#8383f2"/><rect x="707.86" y="963.31" width="4.57" height="10.33" fill="#8383f2"/><rect x="711.83" y="965.70" width="3.77" height="7.95" fill="#8383f2"/><rect x="705.00" y="966.09" width="3.58" height="7.55" fill="#8383f2"/><rect x="707.98" y="963.31" width="4.57" height="10.33" fill="#8383f2"/><rect x="711.94" y="965.70" width="3.58" height="7.95" fill="#8383f2"/><rect x="714.92" y="967.68" width="4.57" height="5.96" fill="#8383f2"/><rect x="718.89" y="970.66" width="4.57" height="2.98" fill="#8383f2"/><rect x="722.85" y="972.05" width="12.50" height="1.59" fill="#8383f2"/><rect x="734.76" y="972.65" width="7.54" height="0.99" fill="#8383f2"/><rect x="741.70" y="973.25" width="27.38" height="0.40" fill="#8383f2"/><rect x="768.48" y="972.65" width="12.50" height="0.99" fill="#8383f2"/><rect x="780.38" y="973.25" width="12.50" height="0.40" fill="#8383f2"/><rect x="792.28" y="972.65" width="16.47" height="0.99" fill="#8383f2"/><rect x="808.15" y="971.66" width="4.57" height="1.99" fill="#8383f2"/><rect x="812.12" y="970.07" width="6.55" height="3.58" fill="#8383f2"/><rect x="818.07" y="967.68" width="4.57" height="5.96" fill="#8383f2"/><rect x="822.04" y="964.11" width="8.53" height="9.54" fill="#8383f2"/><rect x="829.97" y="962.72" width="4.57" height="10.93" fill="#8383f2"/><rect x="833.94" y="963.71" width="8.14" height="9.93" fill="#8383f2"/><rect x="841.48" y="958.15" width="3.97" height="15.50" fill="#8383f2"/><rect x="844.85" y="961.72" width="7.54" height="11.92" fill="#8383f2"/><rect x="851.80" y="960.73" width="4.57" height="12.91" fill="#8383f2"/><rect x="855.76" y="955.76" width="12.50" height="17.88" fill="#8383f2"/><rect x="867.67" y="956.75" width="8.53" height="16.89" fill="#8383f2"/><rect x="875.60" y="953.38" width="4.57" height="20.26" fill="#8383f2"/><rect x="879.57" y="954.17" width="4.57" height="19.47" fill="#8383f2"/><rect x="883.54" y="949.21" width="7.54" height="24.44" fill="#8383f2"/><rect x="890.48" y="946.82" width="5.56" height="26.82" fill="#ef8a85"/><rect x="895.44" y="945.23" width="4.57" height="28.41" fill="#ef8a85"/><rect x="899.40" y="944.44" width="6.55" height="29.21" fill="#ef8a85"/><rect x="905.36" y="947.81" width="4.57" height="25.83" fill="#ef8a85"/><rect x="909.32" y="945.83" width="4.57" height="27.81" fill="#ef8a85"/><rect x="913.29" y="942.85" width="4.57" height="30.79" fill="#ef8a85"/><rect x="917.26" y="940.86" width="7.54" height="32.78" fill="#ef8a85"/><rect x="924.20" y="942.85" width="5.56" height="30.79" fill="#ef8a85"/><rect x="929.16" y="944.24" width="6.55" height="29.40" fill="#ef8a85"/><rect x="935.11" y="947.81" width="5.56" height="25.83" fill="#ef8a85"/><rect x="940.07" y="949.40" width="7.94" height="24.24" fill="#8383f2"/><rect x="947.41" y="947.42" width="4.17" height="26.23" fill="#ef8a85"/><rect x="950.98" y="950.79" width="4.57" height="22.85" fill="#8383f2"/><rect x="954.95" y="953.38" width="5.56" height="20.26" fill="#8383f2"/><rect x="959.91" y="951.79" width="3.58" height="21.85" fill="#8383f2"/><rect x="962.88" y="953.77" width="4.57" height="19.87" fill="#8383f2"/><rect x="966.85" y="956.16" width="4.57" height="17.48" fill="#8383f2"/><rect x="970.82" y="958.15" width="11.51" height="15.50" fill="#8383f2"/><rect x="981.73" y="962.72" width="4.57" height="10.93" fill="#8383f2"/><rect x="985.70" y="961.13" width="4.57" height="12.52" fill="#8383f2"/><rect x="989.66" y="962.12" width="8.53" height="11.52" fill="#8383f2"/><rect x="997.60" y="964.11" width="7.54" height="9.54" fill="#8383f2"/><rect x="1004.54" y="960.73" width="4.57" height="12.91" fill="#8383f2"/><rect x="1008.51" y="963.71" width="4.57" height="9.93" fill="#8383f2"/><rect x="1012.48" y="963.11" width="7.54" height="10.53" fill="#8383f2"/><rect x="1019.42" y="960.73" width="8.53" height="12.91" fill="#8383f2"/><rect x="1027.36" y="962.72" width="4.57" height="10.93" fill="#8383f2"/><rect x="1031.32" y="958.74" width="4.57" height="14.90" fill="#8383f2"/><rect x="1035.29" y="956.36" width="4.57" height="17.28" fill="#8383f2"/><rect x="1039.26" y="960.33" width="3.58" height="13.31" fill="#8383f2"/><rect x="1042.23" y="961.72" width="4.57" height="11.92" fill="#8383f2"/><rect x="1046.20" y="962.32" width="12.50" height="11.32" fill="#8383f2"/><rect x="1058.10" y="965.70" width="8.53" height="7.95" fill="#8383f2"/><rect x="1066.04" y="963.71" width="4.57" height="9.93" fill="#8383f2"/><rect x="1070.01" y="960.13" width="8.53" height="13.51" fill="#8383f2"/><rect x="1077.94" y="958.74" width="11.51" height="14.90" fill="#8383f2"/><rect x="1088.85" y="956.36" width="6.75" height="17.28" fill="#8383f2"/><rect x="1085.00" y="959.14" width="3.58" height="14.50" fill="#8383f2"/><rect x="1087.98" y="956.36" width="4.57" height="17.28" fill="#8383f2"/><rect x="1091.94" y="957.35" width="4.57" height="16.29" fill="#8383f2"/><rect x="1095.91" y="952.78" width="4.57" height="20.86" fill="#8383f2"/><rect x="1099.88" y="952.19" width="4.57" height="21.46" fill="#8383f2"/><rect x="1103.85" y="955.76" width="4.57" height="17.88" fill="#8383f2"/><rect x="1107.81" y="954.37" width="7.54" height="19.27" fill="#8383f2"/><rect x="1114.76" y="954.17" width="4.57" height="19.47" fill="#8383f2"/><rect x="1118.72" y="954.77" width="4.57" height="18.87" fill="#8383f2"/><rect x="1122.69" y="951.79" width="4.17" height="21.85" fill="#8383f2"/><rect x="1126.26" y="948.21" width="4.57" height="25.43" fill="#ef8a85"/><rect x="1130.23" y="948.81" width="4.57" height="24.83" fill="#8383f2"/><rect x="1134.20" y="950.79" width="4.57" height="22.85" fill="#8383f2"/><rect x="1138.16" y="947.42" width="3.97" height="26.23" fill="#ef8a85"/><rect x="1141.54" y="949.21" width="7.94" height="24.44" fill="#8383f2"/><rect x="1148.88" y="954.77" width="8.14" height="18.87" fill="#8383f2"/><rect x="1156.41" y="956.75" width="4.57" height="16.89" fill="#8383f2"/><rect x="1160.38" y="959.74" width="12.50" height="13.91" fill="#8383f2"/><rect x="1172.28" y="963.31" width="4.57" height="10.33" fill="#8383f2"/><rect x="1176.25" y="966.09" width="7.54" height="7.55" fill="#8383f2"/><rect x="1183.19" y="964.70" width="4.57" height="8.94" fill="#8383f2"/><rect x="1187.16" y="967.68" width="12.50" height="5.96" fill="#8383f2"/><rect x="1199.06" y="963.31" width="4.57" height="10.33" fill="#8383f2"/><rect x="1203.03" y="964.70" width="4.57" height="8.94" fill="#8383f2"/><rect x="1207.00" y="967.09" width="7.54" height="6.56" fill="#8383f2"/><rect x="1213.94" y="968.68" width="16.07" height="4.97" fill="#8383f2"/><rect x="1229.42" y="965.30" width="3.97" height="8.34" fill="#8383f2"/><rect x="1232.79" y="968.68" width="4.57" height="4.97" fill="#8383f2"/><rect x="1236.75" y="967.28" width="7.54" height="6.36" fill="#8383f2"/><rect x="1243.70" y="970.07" width="8.53" height="3.58" fill="#8383f2"/><rect x="1251.63" y="967.68" width="12.50" height="5.96" fill="#8383f2"/><rect x="1263.54" y="967.09" width="4.57" height="6.56" fill="#8383f2"/><rect x="1267.50" y="964.70" width="4.57" height="8.94" fill="#8383f2"/><rect x="1271.47" y="966.09" width="18.45" height="7.55" fill="#8383f2"/><rect x="1289.32" y="968.28" width="6.55" height="5.36" fill="#8383f2"/><rect x="1295.27" y="967.09" width="10.52" height="6.56" fill="#8383f2"/><rect x="1305.19" y="968.08" width="4.57" height="5.56" fill="#8383f2"/><rect x="1309.16" y="970.66" width="8.53" height="2.98" fill="#8383f2"/><rect x="1317.10" y="971.26" width="4.57" height="2.38" fill="#8383f2"/><rect x="1321.06" y="969.67" width="4.57" height="3.97" fill="#8383f2"/><rect x="1325.03" y="966.69" width="4.57" height="6.95" fill="#8383f2"/><rect x="1329.00" y="969.27" width="6.55" height="4.37" fill="#8383f2"/><rect x="1334.95" y="967.68" width="8.53" height="5.96" fill="#8383f2"/><rect x="1342.88" y="968.68" width="8.53" height="4.97" fill="#8383f2"/><rect x="1350.82" y="969.07" width="18.45" height="4.57" fill="#8383f2"/><rect x="1368.67" y="967.68" width="6.55" height="5.96" fill="#8383f2"/><rect x="1374.62" y="970.07" width="7.54" height="3.58" fill="#8383f2"/><rect x="1381.57" y="967.68" width="4.57" height="5.96" fill="#8383f2"/><rect x="1385.53" y="968.68" width="7.54" height="4.97" fill="#8383f2"/><rect x="1392.48" y="965.30" width="5.56" height="8.34" fill="#8383f2"/><rect x="1397.44" y="962.32" width="6.55" height="11.32" fill="#8383f2"/><rect x="1403.39" y="966.09" width="5.56" height="7.55" fill="#8383f2"/><rect x="1408.35" y="962.32" width="7.54" height="11.32" fill="#8383f2"/><rect x="1415.29" y="961.32" width="4.57" height="12.32" fill="#8383f2"/><rect x="1419.26" y="965.30" width="4.57" height="8.34" fill="#8383f2"/><rect x="1423.22" y="966.29" width="8.53" height="7.35" fill="#8383f2"/><rect x="1431.16" y="964.70" width="7.54" height="8.94" fill="#8383f2"/><rect x="1438.10" y="963.31" width="7.54" height="10.33" fill="#8383f2"/><rect x="1445.05" y="959.74" width="5.56" height="13.91" fill="#8383f2"/><rect x="1450.01" y="962.12" width="4.57" height="11.52" fill="#8383f2"/><rect x="1453.97" y="958.15" width="4.57" height="15.50" fill="#8383f2"/><rect x="1457.94" y="954.77" width="7.54" height="18.87" fill="#8383f2"/><rect x="1464.88" y="952.19" width="4.57" height="21.46" fill="#8383f2"/><rect x="1468.85" y="948.81" width="6.75" height="24.83" fill="#8383f2"/><rect x="1465.00" y="951.79" width="4.57" height="21.85" fill="#8383f2"/><rect x="1468.97" y="948.81" width="7.54" height="24.83" fill="#8383f2"/><rect x="1475.91" y="953.77" width="4.57" height="19.87" fill="#8383f2"/><rect x="1479.88" y="955.76" width="4.57" height="17.88" fill="#8383f2"/><rect x="1483.85" y="956.36" width="7.54" height="17.28" fill="#8383f2"/><rect x="1490.79" y="959.34" width="4.57" height="14.30" fill="#8383f2"/><rect x="1494.76" y="964.70" width="4.57" height="8.94" fill="#8383f2"/><rect x="1498.72" y="961.72" width="4.57" height="11.92" fill="#8383f2"/><rect x="1502.69" y="958.34" width="4.57" height="15.30" fill="#8383f2"/><rect x="1506.66" y="956.75" width="4.57" height="16.89" fill="#8383f2"/><rect x="1510.63" y="960.13" width="4.17" height="13.51" fill="#8383f2"/><rect x="1514.20" y="963.31" width="3.97" height="10.33" fill="#8383f2"/><rect x="1517.57" y="964.70" width="4.57" height="8.94" fill="#8383f2"/><rect x="1521.54" y="966.09" width="8.53" height="7.55" fill="#8383f2"/><rect x="1529.47" y="962.12" width="4.57" height="11.52" fill="#8383f2"/><rect x="1533.44" y="966.09" width="4.57" height="7.55" fill="#8383f2"/><rect x="1537.41" y="967.68" width="4.57" height="5.96" fill="#8383f2"/><rect x="1541.37" y="970.07" width="7.54" height="3.58" fill="#8383f2"/><rect x="1548.32" y="968.87" width="4.57" height="4.77" fill="#8383f2"/><rect x="1552.28" y="969.67" width="11.51" height="3.97" fill="#8383f2"/><rect x="1563.19" y="968.08" width="8.53" height="5.56" fill="#8383f2"/><rect x="1571.13" y="966.09" width="8.53" height="7.55" fill="#8383f2"/><rect x="1579.06" y="964.90" width="8.53" height="8.74" fill="#8383f2"/><rect x="1587.00" y="966.09" width="5.56" height="7.55" fill="#8383f2"/><rect x="1591.96" y="963.31" width="4.57" height="10.33" fill="#8383f2"/><rect x="1595.93" y="960.33" width="3.58" height="13.31" fill="#8383f2"/><rect x="1598.90" y="962.72" width="4.57" height="10.93" fill="#8383f2"/><rect x="1602.87" y="965.70" width="8.53" height="7.95" fill="#8383f2"/><rect x="1610.80" y="967.68" width="3.58" height="5.96" fill="#8383f2"/><rect x="1613.78" y="964.70" width="4.57" height="8.94" fill="#8383f2"/><rect x="1617.75" y="963.31" width="6.55" height="10.33" fill="#8383f2"/><rect x="1623.70" y="966.89" width="5.56" height="6.75" fill="#8383f2"/><rect x="1628.66" y="970.07" width="7.54" height="3.58" fill="#8383f2"/><rect x="1635.60" y="968.28" width="4.57" height="5.36" fill="#8383f2"/><rect x="1639.57" y="964.70" width="4.57" height="8.94" fill="#8383f2"/><rect x="1643.54" y="963.71" width="4.57" height="9.93" fill="#8383f2"/><rect x="1647.50" y="967.09" width="4.57" height="6.56" fill="#8383f2"/><rect x="1651.47" y="969.27" width="4.57" height="4.37" fill="#8383f2"/><rect x="1655.44" y="966.89" width="7.54" height="6.75" fill="#8383f2"/><rect x="1662.38" y="969.27" width="9.53" height="4.37" fill="#8383f2"/><rect x="1671.31" y="969.07" width="11.51" height="4.57" fill="#8383f2"/><rect x="1682.22" y="965.30" width="3.58" height="8.34" fill="#8383f2"/><rect x="1685.19" y="968.08" width="4.57" height="5.56" fill="#8383f2"/><rect x="1689.16" y="966.09" width="8.53" height="7.55" fill="#8383f2"/><rect x="1697.10" y="968.68" width="4.57" height="4.97" fill="#8383f2"/><rect x="1701.06" y="965.70" width="4.57" height="7.95" fill="#8383f2"/><rect x="1705.03" y="961.72" width="4.17" height="11.92" fill="#8383f2"/><rect x="1708.60" y="957.15" width="7.94" height="16.49" fill="#8383f2"/><rect x="1715.94" y="961.72" width="4.57" height="11.92" fill="#8383f2"/><rect x="1719.91" y="966.69" width="4.57" height="6.95" fill="#8383f2"/><rect x="1723.88" y="965.30" width="7.54" height="8.34" fill="#8383f2"/><rect x="1730.82" y="962.12" width="4.57" height="11.52" fill="#8383f2"/><rect x="1734.79" y="963.31" width="8.53" height="10.33" fill="#8383f2"/><rect x="1742.72" y="960.13" width="4.17" height="13.51" fill="#8383f2"/><rect x="1746.29" y="964.11" width="4.96" height="9.54" fill="#8383f2"/><rect x="1750.66" y="967.09" width="15.48" height="6.56" fill="#8383f2"/><rect x="1765.53" y="963.31" width="3.97" height="10.33" fill="#8383f2"/><rect x="1768.91" y="966.89" width="4.17" height="6.75" fill="#8383f2"/><rect x="1772.48" y="965.70" width="4.57" height="7.95" fill="#8383f2"/><rect x="1776.44" y="962.32" width="4.57" height="11.32" fill="#8383f2"/><rect x="1780.41" y="964.70" width="4.57" height="8.94" fill="#8383f2"/><rect x="1784.38" y="967.68" width="8.53" height="5.96" fill="#8383f2"/><rect x="1792.31" y="970.07" width="4.17" height="3.58" fill="#8383f2"/><rect x="1795.89" y="967.28" width="3.97" height="6.36" fill="#8383f2"/><rect x="1799.26" y="968.68" width="11.51" height="4.97" fill="#8383f2"/><rect x="1810.17" y="967.68" width="4.57" height="5.96" fill="#8383f2"/><rect x="1814.14" y="965.70" width="4.57" height="7.95" fill="#8383f2"/><rect x="1818.10" y="963.31" width="4.57" height="10.33" fill="#8383f2"/><rect x="1822.07" y="960.73" width="4.57" height="12.91" fill="#8383f2"/><rect x="1826.04" y="955.36" width="4.57" height="18.28" fill="#8383f2"/><rect x="1830.01" y="949.40" width="4.57" height="24.24" fill="#8383f2"/><rect x="1833.97" y="947.81" width="4.57" height="25.83" fill="#ef8a85"/><rect x="1837.94" y="941.26" width="6.95" height="32.38" fill="#ef8a85"/><rect x="1844.29" y="938.87" width="5.16" height="34.77" fill="#ef8a85"/><rect x="1848.85" y="932.91" width="3.58" height="40.73" fill="#ef8a85"/><line x1="327" y1="1033.90" x2="1856" y2="1033.90" stroke="#cfcfcf" stroke-width="1" stroke-dasharray="2 2"/><path d="M332.05 1033.9 L332.05 1016.64 C340.67 1016.11 371.87 1014.29 383.75 1013.50 C395.64 1012.72 396.81 1012.20 403.34 1011.93 C409.87 1011.67 413.13 1011.67 422.92 1011.93 C432.72 1012.20 449.04 1013.50 462.09 1013.50 C475.15 1013.50 488.21 1012.13 501.26 1011.93 C514.32 1011.74 527.38 1012.26 540.43 1012.33 C553.49 1012.39 569.81 1012.13 579.60 1012.33 C589.39 1012.52 592.33 1013.57 599.19 1013.50 C606.04 1013.44 611.59 1011.48 620.73 1011.93 C629.87 1012.39 641.95 1015.85 654.02 1016.24 C666.10 1016.64 683.40 1014.29 693.19 1014.29 C702.99 1014.29 706.25 1015.98 712.78 1016.24 C719.31 1016.50 727.14 1016.50 732.36 1015.85 C737.59 1015.20 740.52 1012.20 744.11 1012.33 C747.71 1012.46 748.03 1014.61 753.91 1016.64 C759.78 1018.66 772.51 1023.56 779.37 1024.47 C786.22 1025.38 789.16 1024.21 795.04 1022.12 C800.91 1020.03 808.09 1012.91 814.62 1011.93 C821.15 1010.96 824.41 1015.98 834.20 1016.24 C844.00 1016.50 860.32 1013.89 873.37 1013.50 C886.43 1013.11 900.14 1014.09 912.54 1013.89 C924.95 1013.70 936.05 1012.26 947.80 1012.33 C959.55 1012.39 969.34 1014.22 983.05 1014.29 C996.76 1014.35 1015.69 1012.52 1030.05 1012.72 C1044.42 1012.91 1058.39 1014.94 1069.22 1015.46 C1080.06 1015.98 1089.18 1015.92 1095.07 1015.85 C1100.97 1015.79 1100.06 1015.72 1104.58 1015.07 C1109.11 1014.42 1114.70 1012.00 1122.21 1011.93 C1129.72 1011.87 1141.47 1014.35 1149.63 1014.68 C1157.79 1015.00 1164.32 1014.35 1171.17 1013.89 C1178.03 1013.44 1183.58 1012.20 1190.76 1011.93 C1197.94 1011.67 1207.08 1012.07 1214.26 1012.33 C1221.44 1012.59 1225.36 1013.57 1233.84 1013.50 C1242.33 1013.44 1256.69 1011.80 1265.18 1011.93 C1273.67 1012.07 1276.93 1012.98 1284.76 1014.29 C1292.60 1015.59 1305.00 1018.92 1312.18 1019.77 C1319.36 1020.62 1321.98 1019.83 1327.85 1019.38 C1333.73 1018.92 1340.91 1017.35 1347.44 1017.03 C1353.96 1016.70 1360.49 1017.03 1367.02 1017.42 C1373.55 1017.81 1379.42 1019.70 1386.61 1019.38 C1393.79 1019.05 1402.93 1016.50 1410.11 1015.46 C1417.29 1014.42 1421.86 1013.24 1429.69 1013.11 C1437.53 1012.98 1448.62 1013.89 1457.11 1014.68 C1465.60 1015.46 1474.08 1017.29 1480.61 1017.81 C1487.14 1018.33 1490.41 1018.40 1496.28 1017.81 C1502.16 1017.22 1506.07 1014.68 1515.87 1014.29 C1525.66 1013.89 1544.59 1015.39 1555.04 1015.46 C1565.48 1015.53 1572.01 1014.48 1578.54 1014.68 C1585.07 1014.87 1587.02 1015.46 1594.20 1016.64 C1601.39 1017.81 1613.79 1021.40 1621.62 1021.73 C1629.46 1022.05 1634.03 1019.44 1641.21 1018.59 C1648.39 1017.75 1657.53 1016.70 1664.71 1016.64 C1671.89 1016.57 1675.81 1017.88 1684.29 1018.20 C1692.78 1018.53 1703.23 1018.92 1715.63 1018.59 C1728.03 1018.27 1747.62 1016.31 1758.72 1016.24 C1769.82 1016.18 1771.77 1017.81 1782.22 1018.20 C1792.66 1018.59 1812.90 1018.07 1821.39 1018.59 C1829.88 1019.12 1828.05 1020.36 1833.14 1021.34 C1838.23 1022.31 1848.81 1023.95 1851.94 1024.47 L1851.94 1033.9 Z" fill="#8383f2"/><rect x="389.5" y="1042.5" width="1342" height="18" fill="#f0d3d3" stroke="#e8a6a6" stroke-width="1.2"/></svg>
<div class="t" style="right:1669px;top:781.54px;font-size:15.6px;line-height:19.5px;text-align:right;font-weight:bold;color:#000">1OYA_1</div>
<div class="t" style="right:1669px;top:808.54px;font-size:15.6px;line-height:19.5px;text-align:right;color:#000">UNIPROT <b style="color:#6b9ac9">Q02899</b></div>
<div class="t" style="right:1669px;top:835.24px;font-size:15.6px;line-height:19.5px;text-align:right;color:#000">UNMODELED</div>
<div class="t" style="right:1669px;top:879.14px;font-size:15.6px;line-height:19.5px;text-align:right;color:#000">HYDROPATHY</div>
<div class="t" style="right:1669px;top:939.34px;font-size:15.6px;line-height:19.5px;text-align:right;color:#000">DISORDER</div>
<div class="t" style="right:1669px;top:998.54px;font-size:15.6px;line-height:19.5px;text-align:right;color:#000">DISORDERED BINDING</div>
<div class="t" style="right:1669px;top:1042.34px;font-size:15.6px;line-height:19.5px;text-align:right;color:#000">PFAM</div>
<div class="a" style="left:28px;top:1221px;width:1920px;height:378px;border:1px solid #dcdcdc;border-radius:5px;box-sizing:border-box;background:#fff"></div>
<div class="a" style="left:28px;top:1221px;width:1920px;height:57px;background:#5f6670;border-radius:5px 5px 0 0"></div>
<div class="t " style="left:48px;top:1234.82px;font-size:21.8px;line-height:27.25px;color:#fff">Small Molecules</div>
<div class="a" style="left:49px;top:1299px;width:1878px;height:253px;border:1px solid #ddd;box-sizing:border-box"></div>
<div class="a" style="left:50px;top:1300px;width:1876px;height:40px;background:#f5f5f5"></div>
<div class="a" style="left:49px;top:1340px;width:1878px;height:1px;background:#ddd"></div>
<div class="a" style="left:49px;top:1381px;width:1878px;height:2px;background:#ddd"></div>
<div class="a" style="left:370px;top:1341px;width:1px;height:210px;background:#ddd"></div>
<div class="a" style="left:526px;top:1341px;width:1px;height:210px;background:#ddd"></div>
<div class="a" style="left:1148px;top:1341px;width:1px;height:210px;background:#ddd"></div>
<div class="a" style="left:1615px;top:1341px;width:1px;height:210px;background:#ddd"></div>
<div class="t " style="left:57px;top:1307.56px;font-size:18.67px;line-height:23.34px;font-weight:bold">Ligands</div>
<div class="a" style="left:132.5px;top:1310.5px;width:85px;height:23px;background:#777;border-radius:12px"></div>
<div class="t " style="left:140.5px;top:1312.16px;font-size:16.3px;line-height:20.38px;color:#fff;font-weight:bold">1 Unique</div>
<div class="t " style="left:57px;top:1349.86px;font-size:18.67px;line-height:23.34px;font-weight:bold">ID</div>
<div class="t " style="left:377.5px;top:1349.86px;font-size:18.67px;line-height:23.34px;font-weight:bold">Chains</div>
<svg class="a" style="left:444.0px;top:1351.0px" width="18" height="18" viewBox="0 0 18 18"><circle cx="9" cy="9" r="9" fill="#333"/><rect x="7.6" y="3.2" width="3" height="3.4" fill="#fff"/><path d="M6.2 7.6h4.4v6.3h1.6v1.7H6v-1.7h1.6V9.3H6.2z" fill="#fff"/></svg>
<div class="t " style="left:533.5px;top:1349.86px;font-size:18.67px;line-height:23.34px;font-weight:bold;letter-spacing:0.18px">Name / Formula / InChI Key</div>
<div class="t " style="left:1155px;top:1349.86px;font-size:18.67px;line-height:23.34px;font-weight:bold">2D Diagram</div>
<div class="t " style="left:1622px;top:1349.86px;font-size:18.67px;line-height:23.34px;font-weight:bold">3D Interactions</div>
<div class="t " style="left:56.5px;top:1392.36px;font-size:18.67px;line-height:23.34px;color:#3a72b5">FMN</div>
<div class="t " style="left:56.5px;top:1418.66px;font-size:18.67px;line-height:23.34px;color:#3a72b5;font-weight:bold"><u>Query on FMN</u></div>
<div class="a" style="left:57px;top:1457px;width:306px;height:1px;background:#ddd"></div>
<div class="a" style="left:57px;top:1472px;width:306px;height:28px;border:1px solid #ccc;border-radius:4px;box-sizing:border-box"></div>
<div class="t " style="left:64px;top:1476.01px;font-size:16.05px;line-height:20.06px;">Download Ideal Coordinates CCD File</div>
<svg class="a" style="left:339.5px;top:1477px" width="16" height="16" viewBox="0 0 16 16"><circle cx="8" cy="8" r="6.6" fill="none" stroke="#333" stroke-width="1.9"/><rect x="6.8" y="3.7" width="2.5" height="4.2" fill="#333"/><path d="M4.4 7.6H11.6L8 11.6z" fill="#333"/></svg>
<div class="a" style="left:57px;top:1506px;width:258px;height:28px;border:1px solid #ccc;border-radius:4px;box-sizing:border-box"></div>
<div class="t " style="left:64px;top:1509.81px;font-size:16.15px;line-height:20.19px;">Download Instance Coordinates</div>
<svg class="a" style="left:298px;top:1519px" width="9.6" height="4.8" viewBox="0 0 9.6 4.8"><path d="M0 0H9.6L4.8 4.8z" fill="#333"/></svg>
<div class="t " style="left:377.5px;top:1392.36px;font-size:18.67px;line-height:23.34px;">B [auth A]</div>
<div class="t " style="left:533.5px;top:1392.46px;font-size:18.67px;line-height:23.34px;font-weight:bold">FLAVIN MONONUCLEOTIDE</div>
<div class="t " style="left:533.5px;top:1418.86px;font-size:18.67px;line-height:23.34px;">C<span style="font-size:14px;vertical-align:-4px">17</span> H<span style="font-size:14px;vertical-align:-4px">21</span> N<span style="font-size:14px;vertical-align:-4px">4</span> O<span style="font-size:14px;vertical-align:-4px">9</span> P</div>
<div class="t " style="left:533.5px;top:1444.46px;font-size:18.67px;line-height:23.34px;letter-spacing:-0.32px">FVTCRASFADXXNN-SCRDCRAPSA-N</div>
<div class="a" style="left:1622px;top:1390px;width:138px;height:28px;border:1px solid #ccc;border-radius:4px;box-sizing:border-box"></div>
<svg class="a" style="left:1630px;top:1396px" width="16" height="16" viewBox="0 0 16 16"><path d="M8 0.6L15.4 3.2V12.3L8 15.4L0.6 12.3V3.2Z" fill="#333"/><path d="M8 2.4L12.6 4.1L8 5.8L3.4 4.1Z" fill="#fff"/><path d="M9 7.4L13.6 5.6V11.4L9 13.3Z" fill="#fff"/></svg>
<div class="t " style="left:1650.5px;top:1394.06px;font-size:16.2px;line-height:20.25px;">Interactions</div>
<svg class="a" style="left:1743.2px;top:1404px" width="9.5" height="5" viewBox="0 0 9.5 5"><path d="M0 0H9.5L4.75 5z" fill="#333"/></svg>
<svg class="a" style="left:1325px;top:1400px" width="115" height="140" viewBox="0 0 1324 1612"><line x1="978" y1="170" x2="978" y2="230" stroke="#b070d0" stroke-width="11"/><line x1="1000" y1="170" x2="1000" y2="230" stroke="#b070d0" stroke-width="11"/><line x1="880" y1="275" x2="940" y2="275" stroke="#b070d0" stroke-width="11"/><line x1="1015" y1="275" x2="1085" y2="275" stroke="#b070d0" stroke-width="11"/><line x1="978" y1="315" x2="978" y2="375" stroke="#b070d0" stroke-width="11"/><line x1="930" y1="450" x2="860" y2="490" stroke="#333" stroke-width="11"/><line x1="860" y1="490" x2="860" y2="635" stroke="#333" stroke-width="11"/><line x1="860" y1="635" x2="730" y2="705" stroke="#333" stroke-width="11"/><line x1="730" y1="705" x2="730" y2="855" stroke="#333" stroke-width="11"/><line x1="730" y1="855" x2="600" y2="925" stroke="#333" stroke-width="11"/><line x1="600" y1="925" x2="600" y2="1000" stroke="#333" stroke-width="11"/><line x1="600" y1="1000" x2="600" y2="1030" stroke="#3333ee" stroke-width="11"/><path d="M860 635L950 695L935 715Z" fill="#333"/><path d="M940 690L960 700L945 718Z" fill="#f03a3a"/><path d="M730 855L815 905L800 925Z" fill="#333"/><path d="M730 705L650 650L640 670Z" fill="#f4a0a0"/><line x1="540" y1="1100" x2="475" y2="1135" stroke="#3333ee" stroke-width="11"/><line x1="660" y1="1100" x2="730" y2="1135" stroke="#3333ee" stroke-width="11"/><line x1="730" y1="1135" x2="790" y2="1095" stroke="#3333ee" stroke-width="11"/><line x1="760" y1="1150" x2="820" y2="1110" stroke="#3333ee" stroke-width="11"/><line x1="900" y1="1090" x2="985" y2="1135" stroke="#3333ee" stroke-width="11"/><line x1="985" y1="1135" x2="1050" y2="1095" stroke="#f03a3a" stroke-width="11"/><line x1="1000" y1="1160" x2="1060" y2="1120" stroke="#f03a3a" stroke-width="11"/><line x1="985" y1="1135" x2="985" y2="1215" stroke="#3333ee" stroke-width="11"/><line x1="930" y1="1310" x2="855" y2="1350" stroke="#3333ee" stroke-width="11"/><line x1="855" y1="1350" x2="730" y2="1275" stroke="#333" stroke-width="11"/><line x1="730" y1="1275" x2="730" y2="1135" stroke="#333" stroke-width="11"/><line x1="855" y1="1350" x2="855" y2="1440" stroke="#f03a3a" stroke-width="11"/><line x1="875" y1="1360" x2="875" y2="1440" stroke="#f03a3a" stroke-width="11"/><line x1="730" y1="1275" x2="660" y2="1315" stroke="#3333ee" stroke-width="11"/><line x1="650" y1="1290" x2="700" y2="1262" stroke="#3333ee" stroke-width="11"/><line x1="545" y1="1315" x2="475" y2="1275" stroke="#3333ee" stroke-width="11"/><line x1="475" y1="1275" x2="475" y2="1135" stroke="#333" stroke-width="11"/><line x1="475" y1="1135" x2="350" y2="1065" stroke="#333" stroke-width="11"/><line x1="455" y1="1160" x2="360" y2="1100" stroke="#333" stroke-width="11"/><line x1="350" y1="1065" x2="230" y2="1135" stroke="#333" stroke-width="11"/><line x1="230" y1="1135" x2="230" y2="1285" stroke="#333" stroke-width="11"/><line x1="255" y1="1160" x2="255" y2="1260" stroke="#333" stroke-width="11"/><line x1="230" y1="1285" x2="350" y2="1355" stroke="#333" stroke-width="11"/><line x1="350" y1="1355" x2="475" y2="1275" stroke="#333" stroke-width="11"/><line x1="360" y1="1320" x2="455" y2="1265" stroke="#333" stroke-width="11"/><line x1="230" y1="1135" x2="105" y2="1065" stroke="#333" stroke-width="11"/><line x1="230" y1="1285" x2="105" y2="1355" stroke="#333" stroke-width="11"/><text x="978" y="155" font-size="70" fill="#f03a3a" text-anchor="middle" font-family="Liberation Sans">O</text><text x="815" y="300" font-size="70" fill="#f03a3a" text-anchor="middle" font-family="Liberation Sans">HO</text><text x="1148" y="300" font-size="70" fill="#f03a3a" text-anchor="middle" font-family="Liberation Sans">OH</text><text x="975" y="300" font-size="70" fill="#b070d0" text-anchor="middle" font-family="Liberation Sans">P</text><text x="978" y="435" font-size="70" fill="#f03a3a" text-anchor="middle" font-family="Liberation Sans">O</text><text x="990" y="728" font-size="70" fill="#f03a3a" text-anchor="middle" font-family="Liberation Sans">OH</text><text x="590" y="660" font-size="70" fill="#f03a3a" text-anchor="middle" font-family="Liberation Sans">HO</text><text x="875" y="945" font-size="70" fill="#f03a3a" text-anchor="middle" font-family="Liberation Sans">OH</text><text x="600" y="1080" font-size="70" fill="#3333ee" text-anchor="middle" font-family="Liberation Sans">N</text><text x="855" y="1085" font-size="70" fill="#3333ee" text-anchor="middle" font-family="Liberation Sans">N</text><text x="1105" y="1085" font-size="70" fill="#f03a3a" text-anchor="middle" font-family="Liberation Sans">O</text><text x="1005" y="1300" font-size="70" fill="#3333ee" text-anchor="middle" font-family="Liberation Sans">NH</text><text x="600" y="1375" font-size="70" fill="#3333ee" text-anchor="middle" font-family="Liberation Sans">N</text><text x="855" y="1525" font-size="70" fill="#f03a3a" text-anchor="middle" font-family="Liberation Sans">O</text><text x="805" y="625" font-size="40" fill="#888" text-anchor="middle" font-family="Liberation Sans">R</text><text x="780" y="750" font-size="40" fill="#888" text-anchor="middle" font-family="Liberation Sans">R</text><text x="685" y="830" font-size="40" fill="#888" text-anchor="middle" font-family="Liberation Sans">R</text></svg>
<svg class="a" style="left:1715px;top:238px" width="100" height="120" viewBox="0 0 1343 1612" fill="none" stroke-linecap="round" stroke-linejoin="round"><path d="M850 125 Q860 110 900.0 105.0 L940 100" stroke="#a02810" stroke-width="10"/><path d="M700 300 Q760 380 795.0 425.0 Q830 470 865.0 430.0 Q900 390 930.0 405.0 Q960 420 1000.0 470.0 Q1040 520 1030.0 550.0 Q1020 580 1075.0 585.0 Q1130 590 1140.0 675.0 Q1150 760 1095.0 780.0 Q1040 800 1010.0 835.0 L980 870" stroke="#b03a1c" stroke-width="12"/><path d="M330 480 Q320 330 390.0 330.0 Q460 330 470.0 325.0 Q480 320 500.0 330.0 Q520 340 560.0 355.0 Q600 370 680.0 375.0 Q760 380 815.0 375.0 L870 370" stroke="#4466e0" stroke-width="12"/><path d="M600 560 Q620 470 670.0 460.0 Q720 450 760.0 465.0 Q800 480 815.0 510.0 L830 540" stroke="#3a88d8" stroke-width="12"/><path d="M600 560 Q660 680 680.0 740.0 Q700 800 760.0 800.0 Q820 800 860.0 830.0 Q900 860 950.0 840.0 L1000 820" stroke="#3a70d8" stroke-width="12"/><path d="M1050 650 Q1180 690 1175.0 745.0 Q1170 800 1120.0 840.0 Q1070 880 1085.0 890.0 Q1100 900 1155.0 950.0 Q1210 1000 1210.0 1025.0 Q1210 1050 1145.0 1040.0 Q1080 1030 1040.0 1015.0 Q1000 1000 970.0 1005.0 Q940 1010 920.0 1055.0 Q900 1100 930.0 1135.0 Q960 1170 980.0 1210.0 Q1000 1250 960.0 1245.0 L920 1240" stroke="#3d7de0" stroke-width="12"/><path d="M260 880 Q380 850 420.0 835.0 Q460 820 510.0 800.0 Q560 780 570.0 740.0 L580 700" stroke="#d86a30" stroke-width="10"/><path d="M540 860 Q640 820 670.0 860.0 Q700 900 710.0 1000.0 Q720 1100 680.0 1125.0 Q640 1150 620.0 1075.0 L600 1000" stroke="#e0983a" stroke-width="10"/><path d="M210 620 Q300 690 315.0 690.0 L330 690" stroke="#b84a1c" stroke-width="10"/><path d="M320 1300 Q420 1380 470.0 1390.0 Q520 1400 490.0 1420.0 Q460 1440 480.0 1490.0 Q500 1540 550.0 1420.0 L600 1300" stroke="#a8c838" stroke-width="12"/><path d="M900 1380 Q980 1420 1040.0 1410.0 Q1100 1400 1140.0 1350.0 L1180 1300" stroke="#70d080" stroke-width="12"/><path d="M660 800 Q760 810 820.0 845.0 Q880 880 875.0 900.0 L870 920" stroke="#88cc50" stroke-width="10"/><path d="M841 283 L856 298 L866 313 L873 326 L874 335 L873 340 L868 339 L861 332 L853 320 L846 303 L841 283 L839 261 L841 239 L847 219 L858 203 L872 191 L890 186 L909 185 L929 191 L949 201 L966 214 L981 229 L991 244 L998 257 L999 266 L998 271 L993 270 L986 263 L978 251 L971 234 L966 214 L964 192 L966 170" stroke="#9e2414" stroke-width="30"/><path d="M556 292 L548 311 L539 326 L530 337 L523 342 L520 343 L520 339 L524 332 L534 322 L547 311 L565 300 L585 292 L606 288 L626 287 L645 292 L661 302 L673 317 L681 335 L684 355 L682 377 L677 398 L669 416 L660 431 L651 442 L645 448 L641 448 L641 444 L645 437 L655 427 L668 416 L686 406 L706 397 L727 393 L748 393 L767 398 L783 407 L795 422 L802 440 L805 461" stroke="#c03e1c" stroke-width="32"/><path d="M236 582 L246 596 L253 608 L257 618 L258 626 L257 628 L254 626 L252 620 L249 609 L248 595 L249 579 L252 561 L259 545 L268 531 L280 520 L294 513 L309 511 L325 514 L341 521 L355 531 L367 544 L377 557 L383 570 L387 580 L388 587 L388 590 L385 588" stroke="#c44a22" stroke-width="30"/><path d="M805 544 L790 560 L775 573 L763 583 L754 587 L751 588 L753 585 L761 579 L774 571 L792 563 L814 556 L836 552 L859 551 L879 553 L895 561 L907 572 L913 587 L912 605 L907 625 L896 645 L883 664 L868 680 L853 693 L840 703 L832 707 L828 708 L830 705 L838 699 L852 691 L870 683 L891 676 L914 672 L936 671 L957 673 L973 681 L984 692 L990 707 L990 725 L984 745 L974 765 L960 784 L945 800 L930 813 L918 823 L909 827 L906 828 L908 825 L916 819 L929 811 L947 803 L969 796 L991 792 L1014 791 L1034 793 L1050 801 L1062 812 L1068 827 L1067 845 L1062 865 L1051 885 L1038 904 L1023 920 L1008 933 L995 943 L987 947 L983 948 L985 945 L993 939 L1007 931 L1025 923 L1046 916 L1069 912 L1091 911 L1112 913 L1128 921 L1139 932 L1145 947 L1145 965 L1139 985 L1129 1005 L1115 1024" stroke="#2ea7b5" stroke-width="42"/><path d="M910 552 L906 568 L901 582 L898 593 L896 601 L898 606 L903 608 L911 608 L923 606 L937 603 L953 601 L971 600 L988 600 L1004 604 L1018 610 L1029 619 L1037 632 L1042 647 L1043 663 L1041 680 L1038 697 L1033 713 L1028 727" stroke="#2a80d8" stroke-width="36"/><path d="M733 578 L727 590 L720 600 L715 607 L711 611 L709 613 L711 612 L716 609 L725 606 L736 602 L750 600 L764 599 L780 600 L794 605 L806 612" stroke="#c84020" stroke-width="34"/><path d="M192 916 L201 933 L205 949 L203 964 L198 974 L189 979 L179 979 L169 973 L161 961 L156 945 L156 926 L160 905 L170 886 L185 868 L204 854 L227 845 L250 842 L274 845 L295 853 L314 865 L328 881 L337 897 L341 914 L339 928 L334 938 L325 943 L315 943 L305 937 L297 925" stroke="#d05a22" stroke-width="30"/><path d="M247 1083 L233 1102 L216 1115 L196 1121 L177 1120 L161 1112 L149 1098 L143 1080 L144 1060 L152 1040 L166 1022 L186 1008 L210 1000 L236 999 L262 1005 L285 1018 L303 1037 L316 1060 L321 1085 L320 1110 L312 1133 L298 1152 L281 1165 L262 1171 L243 1170 L226 1162 L214 1148 L208 1130 L209 1110 L217 1090 L231 1072 L252 1058 L276 1050 L301 1049 L327 1055 L350 1068 L369 1087 L381 1110 L387 1135 L385 1160 L377 1183 L364 1202 L346 1215 L327 1221 L308 1220 L292 1212 L280 1198 L274 1180 L274 1160 L282 1140 L297 1122 L317 1108 L341 1100" stroke="#c88a2c" stroke-width="18"/><path d="M474 907 L471 924 L465 939 L458 949 L451 954 L445 954 L441 949 L441 940 L444 928 L452 915 L464 902 L479 891 L497 882 L515 878 L534 879 L552 885 L567 895 L579 910 L587 928 L591 947 L591 966 L588 983 L582 997 L575 1007 L567 1012" stroke="#b8a030" stroke-width="34"/><path d="M433 1063 L438 1080 L441 1096 L441 1108 L440 1116 L438 1118 L437 1116 L437 1108 L439 1096 L444 1081 L453 1064 L464 1048 L479 1034 L496 1023 L514 1017 L533 1016 L552 1020 L569 1029 L584 1043 L596 1059 L604 1077 L610 1095 L612 1110 L613 1122 L612 1130 L610 1133 L608 1130 L608 1122 L611 1110" stroke="#e0b840" stroke-width="34"/><path d="M510 1169 L494 1184 L477 1194 L459 1196 L444 1193 L432 1184 L426 1171 L425 1155 L432 1138 L445 1123 L463 1111 L485 1104 L509 1102 L533 1108 L555 1119 L573 1136 L586 1157 L593 1181 L593 1206 L586 1229 L575 1249 L559 1264 L542 1274 L524 1276 L509 1273 L497 1264 L491 1251 L490 1235 L497 1218 L510 1203 L528 1191 L550 1184 L574 1182 L598 1188 L620 1199 L638 1216 L651 1237 L658 1261 L658 1286 L651 1309 L640 1329" stroke="#a4b430" stroke-width="26"/><path d="M757 960 L729 963 L704 963 L684 959 L672 954 L668 948 L673 943 L686 940 L706 939 L731 942 L758 949 L785 959 L809 974 L828 991 L840 1010 L843 1030 L837 1049 L823 1066 L802 1081 L776 1092 L748 1098 L720 1102 L694 1101 L675 1098 L662 1092 L658 1086 L663 1081 L676 1078 L696 1077 L721 1080 L749 1087 L776 1098 L800 1112 L819 1129 L830 1148 L833 1168 L827 1187 L813 1204 L792 1219 L767 1230 L738 1237 L710 1240 L685 1239 L665 1236 L653 1230 L649 1225 L654 1219 L667 1216 L687 1215 L712 1218 L739 1225 L766 1236 L790 1250 L809 1267 L821 1286 L824 1306 L818 1325 L804 1342 L783 1357 L757 1368 L729 1375 L701 1378 L675 1377 L656 1374 L643 1369 L639 1363 L644 1357 L657 1354 L677 1353 L702 1356 L729 1363 L757 1374 L781 1388 L800 1405 L811 1424 L814 1444 L808 1463 L794 1480 L773 1495 L747 1506 L719 1513 L691 1516 L666 1515 L646 1512 L634 1507" stroke="#48bc48" stroke-width="44"/><path d="M938 1220 L938 1241 L935 1259 L930 1273 L924 1281 L919 1283 L915 1278 L915 1269 L917 1254 L924 1237 L935 1220 L949 1203 L967 1189 L986 1179 L1006 1175 L1026 1177 L1044 1186 L1059 1199 L1071 1218 L1079 1239 L1083 1260 L1083 1281 L1080 1299 L1075 1313 L1069 1321 L1064 1323 L1060 1318 L1060 1309 L1062 1294 L1069 1277 L1080 1260 L1094 1243 L1112 1229 L1131 1219 L1151 1215 L1171 1217 L1189 1226 L1204 1239 L1216 1258 L1224 1279 L1228 1300" stroke="#5ad890" stroke-width="34"/><path d="M351 1302 L365 1311 L376 1320 L384 1328 L390 1332 L394 1333 L397 1330 L398 1322 L399 1311 L401 1297 L405 1281 L410 1264 L418 1247 L429 1232 L442 1220 L457 1212 L474 1208 L492 1208 L510 1211 L527 1218 L543 1227 L556 1236 L567 1245 L576 1253 L582 1257" stroke="#c0d040" stroke-width="34"/><path d="M420 570 L470 790" stroke="#3b58e8" stroke-width="50" stroke-linecap="butt"/><path d="M510 520 L525 770" stroke="#3b58e8" stroke-width="38" stroke-linecap="butt"/><path d="M330 690 L490 670" stroke="#a8401a" stroke-width="40" stroke-linecap="butt"/><path d="M380 785 L510 765" stroke="#a8401a" stroke-width="40" stroke-linecap="butt"/><path d="M670 850 L630 1050" stroke="#4a9a38" stroke-width="54" stroke-linecap="butt"/><path d="M720 560 L760 1000" stroke="#2e9a98" stroke-width="44" stroke-linecap="butt"/><path d="M780 1320 L940 1330" stroke="#40b860" stroke-width="46" stroke-linecap="butt"/><path d="M690 1440 L900 1400" stroke="#40b860" stroke-width="48" stroke-linecap="butt"/><circle cx="330" cy="470" r="30" fill="#3d5ee0"/><circle cx="420" cy="440" r="26" fill="#3d5ee0"/><circle cx="430" cy="480" r="28" fill="none" stroke="#3d5ee0" stroke-width="14"/><path d="M430 840L520 870L450 900Z" fill="#a05a20"/></svg>
</body></html>
